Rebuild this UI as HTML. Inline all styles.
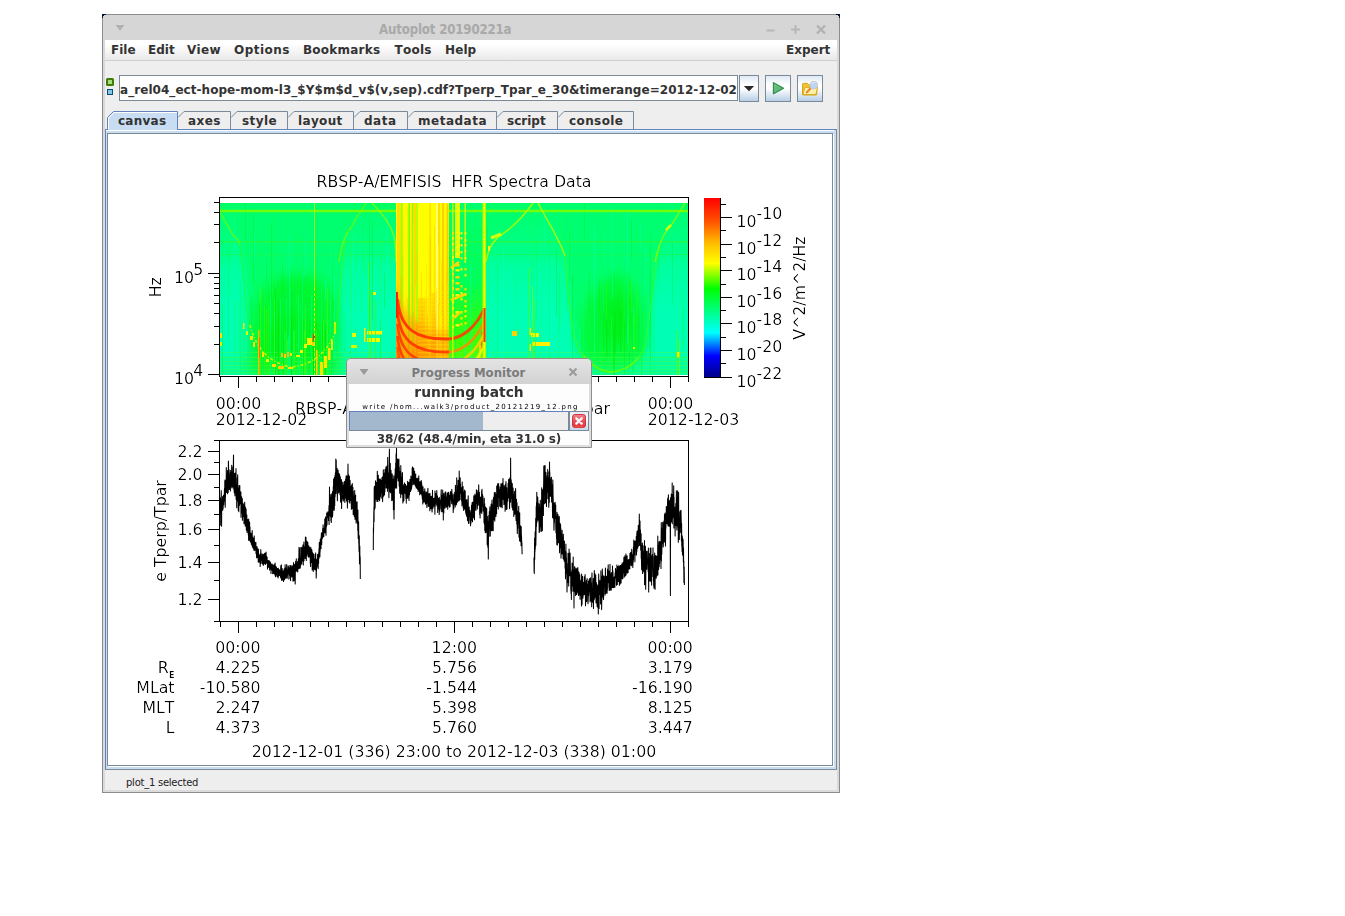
<!DOCTYPE html>
<html><head><meta charset="utf-8"><title>Autoplot 20190221a</title>
<style>
html,body{margin:0;padding:0;background:#fff;}
body{width:1345px;height:916px;position:relative;overflow:hidden;font-family:"DejaVu Sans","Liberation Sans",sans-serif;}
.abs{position:absolute;}
body{font-kerning:none;font-feature-settings:'kern' 0,'liga' 0;}
.ui{font-family:"DejaVu Sans","Liberation Sans",sans-serif;font-weight:bold;font-size:12px;color:#333;white-space:pre;line-height:14px;}
#win{left:102px;top:14px;width:738px;height:779px;background:#eeeeee;}
#titlebar{left:102px;top:14px;width:738px;height:26px;background:#d6d6d6;}
#menubar{left:105px;top:40px;width:732px;height:20px;background:linear-gradient(#ffffff 0%,#ffffff 20%,#e9e9e9 100%);}
.mi{top:43px;}
.tab{top:111px;height:18px;border:1px solid #7a8a99;border-bottom:none;background:#eeeeee;box-sizing:border-box;}
.tabt{top:114px;}
.btn{top:75px;height:27px;box-sizing:border-box;border:1px solid #7a8a99;background:linear-gradient(#dfe9f4 0%,#ffffff 35%,#ffffff 50%,#b8cfe5 100%);}
</style></head><body>
<!-- window frame -->
<div class="abs" id="win"></div>
<div class="abs" id="titlebar"></div>
<div class="abs" style="left:102px;top:14px;width:738px;height:1px;background:#8c8c8c"></div>
<div class="abs" style="left:102px;top:14px;width:1px;height:779px;background:#8c8c8c"></div>
<div class="abs" style="left:839px;top:14px;width:1px;height:779px;background:#8c8c8c"></div>
<div class="abs" style="left:102px;top:792px;width:738px;height:1px;background:#8c8c8c"></div>
<div class="abs" style="left:103px;top:40px;width:2px;height:752px;background:#d9d9d9"></div>
<div class="abs" style="left:837px;top:40px;width:2px;height:752px;background:#d9d9d9"></div>
<div class="abs" style="left:103px;top:790px;width:736px;height:2px;background:#dcdcdc"></div>
<svg class="abs" style="left:102px;top:14px" width="738" height="6" shape-rendering="crispEdges"><path d="M0 0h4v1h-2v1h-1v2h-1z" fill="#04143a"/><path d="M738 0h-4v1h2v1h1v2h1z" fill="#04143a"/></svg>
<div class="abs" style="left:379px;top:21.500px;font-family:'DejaVu Sans Condensed','DejaVu Sans',sans-serif;font-weight:bold;font-size:13.2px;letter-spacing:-0.2px;color:#a9a9a9;white-space:pre;line-height:16px;">Autoplot 20190221a</div>
<svg class="abs" style="left:102px;top:14px" width="738" height="26" viewBox="0 0 738 26">
<path d="M13.500 11h9l-4.500 5.700z" fill="#b0b0b0"/>
<path d="M664.500 16.500h8" stroke="#b7b7b7" stroke-width="2" fill="none"/>
<path d="M689 15.500h9M693.500 11v9" stroke="#b7b7b7" stroke-width="2" fill="none"/>
<path d="M715 11.500l8 8M723 11.500l-8 8" stroke="#b2b2b2" stroke-width="2.400" fill="none"/>
</svg>
<!-- menu bar -->
<div class="abs" id="menubar"></div>
<div class="abs" style="left:105px;top:60px;width:732px;height:1px;background:#cfcfcf"></div>
<div class="abs ui mi" style="left:111px">File</div>
<div class="abs ui mi" style="left:148px">Edit</div>
<div class="abs ui mi" style="left:187px;letter-spacing:0.3px">View</div>
<div class="abs ui mi" style="left:234px;letter-spacing:0.45px">Options</div>
<div class="abs ui mi" style="left:303px;letter-spacing:0.22px">Bookmarks</div>
<div class="abs ui mi" style="left:394.5px;letter-spacing:0.25px">Tools</div>
<div class="abs ui mi" style="left:445px;letter-spacing:0.1px">Help</div>
<div class="abs ui mi" style="left:786px">Expert</div>
<!-- address bar -->
<div class="abs" style="left:106px;top:78px;width:8px;height:8px;box-sizing:border-box;border:2px solid #3d7d05;border-radius:1.500px;background:#a6dc7c"></div>
<div class="abs" style="left:107px;top:89px;width:6px;height:6px;box-sizing:border-box;border:1px solid #064d74;background:#88c4e6"></div>
<div class="abs" style="left:119px;top:75px;width:619px;height:26px;box-sizing:border-box;border:1px solid #7a8a99;background:#fff;overflow:hidden">
<div class="abs ui" style="right:0px;top:6.500px;letter-spacing:0.05px">data_rel04_ect-hope-mom-l3_$Y$m$d_v$(v,sep).cdf?Tperp_Tpar_e_30&amp;timerange=2012-12-02</div></div>
<div class="abs btn" style="left:739px;width:20px"></div>
<svg class="abs" style="left:739px;top:75px" width="20" height="27"><path d="M4.800 11h10.400l-5.200 5.200z" fill="#2b2b2b"/></svg>
<div class="abs btn" style="left:765px;width:26px"></div>
<svg class="abs" style="left:765px;top:75px" width="26" height="27">
<defs><linearGradient id="pg" x1="0" y1="0" x2="1" y2="1"><stop offset="0" stop-color="#8fd3a0"/><stop offset="1" stop-color="#3fa65c"/></linearGradient></defs>
<path d="M8.500 7.700v11l10-5.500z" fill="url(#pg)" stroke="#2c8f4c" stroke-width="1.300" stroke-linejoin="round"/>
<path d="M10 10.300v5.600l5-2.800z" fill="#5cba74" opacity="0.800"/></svg>
<div class="abs btn" style="left:797px;width:26px"></div>
<svg class="abs" style="left:797px;top:75px" width="26" height="27">
<path d="M5.500 9.200q0-.8.800-.8h4.200l1.200 1.600h7.300q.8 0 .8.800v8.400q0 .8-.8.800h-12.700q-.8 0-.8-.8z" fill="#f0c43c" stroke="#d6a416" stroke-width="1"/>
<path d="M5.800 19.500l2.200-7.200h12.600l-1.800 7.200z" fill="#fff2a8" stroke="#d9aa1c" stroke-width="1" stroke-linejoin="round"/>
<path d="M14.200 12.800l-4.400 4.600" stroke="#e8742a" stroke-width="2" stroke-linecap="round"/>
<path d="M13.800 13.300l-3.600 3.800" stroke="#f7c23a" stroke-width="0.700" stroke-dasharray="1 1"/>
<circle cx="16.800" cy="10.200" r="3.700" fill="#b9d6f7" stroke="#cfc6c6" stroke-width="1.100"/>
<path d="M14.600 9.200a2.600 2.600 0 0 1 3.800-1.300" stroke="#e6f1ff" stroke-width="1" fill="none"/>
</svg>
<!-- tabs -->
<svg class="abs" style="left:100px;top:105px" width="560" height="30" viewBox="100 105 560 30" shape-rendering="crispEdges">
<path d="M178.0 117.5L184.0 111.5H230.5V129.5" fill="none" stroke="#7a8a99" stroke-width="1" shape-rendering="auto"/>
<path d="M231.0 117.5L237.0 111.5H287.5V129.5" fill="none" stroke="#7a8a99" stroke-width="1" shape-rendering="auto"/>
<path d="M288.0 117.5L294.0 111.5H353.5V129.5" fill="none" stroke="#7a8a99" stroke-width="1" shape-rendering="auto"/>
<path d="M354.0 117.5L360.0 111.5H407.5V129.5" fill="none" stroke="#7a8a99" stroke-width="1" shape-rendering="auto"/>
<path d="M408.0 117.5L414.0 111.5H496.5V129.5" fill="none" stroke="#7a8a99" stroke-width="1" shape-rendering="auto"/>
<path d="M497.0 117.5L503.0 111.5H557.5V129.5" fill="none" stroke="#7a8a99" stroke-width="1" shape-rendering="auto"/>
<path d="M558.0 117.5L564.0 111.5H633.5V129.5" fill="none" stroke="#7a8a99" stroke-width="1" shape-rendering="auto"/>
</svg>
<div class="abs ui tabt" style="left:188px;letter-spacing:0.4px">axes</div>
<div class="abs ui tabt" style="left:242px;letter-spacing:0.4px">style</div>
<div class="abs ui tabt" style="left:298px;letter-spacing:0.35px">layout</div>
<div class="abs ui tabt" style="left:364px;letter-spacing:0.5px">data</div>
<div class="abs ui tabt" style="left:418px;letter-spacing:0.5px">metadata</div>
<div class="abs ui tabt" style="left:507px">script</div>
<div class="abs ui tabt" style="left:569px;letter-spacing:0.4px">console</div>
<!-- content pane border -->
<div class="abs" style="left:105px;top:129px;width:732px;height:641px;box-sizing:border-box;background:#c8ddf2;border:1px solid #7a8a99;border-left-color:#6382bf;border-top-color:#6382bf"></div>
<div class="abs" style="left:106px;top:130px;width:728px;height:1px;background:#fff"></div>
<div class="abs" style="left:107px;top:133px;width:726px;height:633px;box-sizing:border-box;background:#fff;border:1px solid #7a8a99"></div>
<div class="abs" style="left:833px;top:134px;width:1px;height:633px;background:#fff"></div>
<div class="abs" style="left:108px;top:766px;width:726px;height:1px;background:#fff"></div>
<!-- selected tab -->
<svg class="abs" style="left:100px;top:105px" width="90" height="30" viewBox="100 105 90 30">
<path d="M107.5 133V117.5L113.5 111.5H177.5V129.5H107.5" fill="#c8ddf2" stroke="none"/>
<path d="M108.5 130V118L114 112.5H177" fill="none" stroke="#fff" stroke-width="1"/>
<path d="M107.5 129.5V117.5L113.5 111.5H177.5V129.5" fill="none" stroke="#6382bf" stroke-width="1"/>
<path d="M108 129.500h69" stroke="#c8ddf2" stroke-width="1"/>
</svg>
<div class="abs ui tabt" style="left:118px;letter-spacing:0.25px">canvas</div>
<!-- status bar -->
<div class="abs" style="left:126px;top:777px;font-size:10px;color:#222;white-space:pre;line-height:12px;letter-spacing:-0.25px">plot_1 selected</div>
<svg class="abs" style="left:108px;top:134px" width="724" height="631" viewBox="108 134 724 631" font-family="'DejaVu Sans','Liberation Sans',sans-serif" font-size="15.75px" fill="#000" style="font-kerning:none">
<defs>
<linearGradient id="cb" x1="0" y1="1" x2="0" y2="0">
<stop offset="0" stop-color="rgb(0,0,137)"/><stop offset="0.1176" stop-color="rgb(0,0,255)"/><stop offset="0.2471" stop-color="rgb(0,255,255)"/><stop offset="0.4941" stop-color="rgb(0,255,0)"/><stop offset="0.6353" stop-color="rgb(255,255,0)"/><stop offset="0.7529" stop-color="rgb(255,185,0)"/><stop offset="0.8667" stop-color="rgb(255,84,0)"/><stop offset="1" stop-color="rgb(255,0,0)"/>
</linearGradient>
<linearGradient id="bg" x1="0" y1="0" x2="0" y2="1">
<stop offset="0" stop-color="rgb(0,255,95)"/><stop offset="0.25" stop-color="rgb(0,255,125)"/><stop offset="0.55" stop-color="rgb(0,255,160)"/><stop offset="0.85" stop-color="rgb(0,255,175)"/><stop offset="1" stop-color="rgb(0,255,120)"/>
</linearGradient>
<linearGradient id="yb" x1="0" y1="0" x2="0" y2="1">
<stop offset="0" stop-color="rgb(255,255,0)"/><stop offset="0.45" stop-color="rgb(255,235,0)"/><stop offset="0.75" stop-color="rgb(255,190,0)"/><stop offset="1" stop-color="rgb(255,150,0)"/>
</linearGradient>
<linearGradient id="topg" x1="0" y1="0" x2="0" y2="1">
<stop offset="0" stop-color="rgb(0,255,90)" stop-opacity="1"/><stop offset="0.1" stop-color="rgb(0,255,114)" stop-opacity="1"/><stop offset="0.45" stop-color="rgb(0,255,134)" stop-opacity="0.95"/><stop offset="0.6" stop-color="rgb(0,255,150)" stop-opacity="0.6"/><stop offset="1" stop-color="rgb(0,255,150)" stop-opacity="0"/>
</linearGradient>
<linearGradient id="midg" x1="0" y1="0" x2="0" y2="1">
<stop offset="0" stop-color="rgb(0,255,110)"/><stop offset="0.45" stop-color="rgb(0,255,90)"/><stop offset="0.7" stop-color="rgb(40,255,20)"/><stop offset="1" stop-color="rgb(90,255,0)"/>
</linearGradient>
<filter id="noop" filterUnits="userSpaceOnUse" x="108" y="134" width="724" height="631"><feComponentTransfer><feFuncA type="gamma" exponent="1.7" amplitude="1" offset="0"/></feComponentTransfer></filter>
<filter id="b6" x="-30%" y="-30%" width="160%" height="160%"><feGaussianBlur stdDeviation="6"/></filter>
<filter id="b3" x="-30%" y="-30%" width="160%" height="160%"><feGaussianBlur stdDeviation="3"/></filter>
<filter id="b05" x="-5%" y="-5%" width="110%" height="110%"><feGaussianBlur stdDeviation="0.5"/></filter>
<filter id="b1" x="-30%" y="-30%" width="160%" height="160%"><feGaussianBlur stdDeviation="0.8"/></filter>
<clipPath id="ybc"><rect x="396" y="203" width="53" height="172"/></clipPath>
<clipPath id="sc"><rect x="220" y="203" width="468" height="172"/></clipPath>
</defs>
<g clip-path="url(#sc)">
<rect x="220" y="203" width="468" height="172" fill="rgb(0,255,180)"/>
<rect x="220" y="203" width="468" height="110" fill="url(#topg)"/>
<path d="M222 203 C232 222 240 232 243 250 C246 290 247 320 252 338 C258 356 270 368 290 371 C312 370 330 356 337 332 C340 300 341 268 345 240 C349 222 356 212 364 203Z" fill="rgb(0,255,110)" filter="url(#b3)" opacity="1"/>
<path d="M536 203 C548 222 560 240 565 256 C569 300 571 335 580 352 C590 366 600 372 612 373 C626 371 640 362 646 345 C651 318 653 280 660 246 C666 226 676 212 686 203Z" fill="rgb(0,255,112)" filter="url(#b3)" opacity="1"/>
<path d="M248 375 C246 340 252 300 270 284 C290 270 318 272 330 290 C342 310 342 345 338 375Z" fill="rgb(0,245,25)" filter="url(#b6)" opacity="0.7"/>
<path d="M258 375 C256 345 270 318 294 312 C318 318 332 345 330 375Z" fill="rgb(0,236,0)" filter="url(#b6)" opacity="0.45"/>
<path d="M582 356 C576 318 590 282 616 274 C640 282 650 318 644 356 C628 370 600 370 582 356Z" fill="rgb(0,246,30)" filter="url(#b6)" opacity="0.65"/>
<ellipse cx="617" cy="320" rx="14" ry="24" fill="rgb(0,234,0)" filter="url(#b6)" opacity="0.5"/>
<rect x="449" y="203" width="37" height="172" fill="url(#midg)"/>
<path d="M486 203 H536 C528 212 518 222 508 230 C498 236 490 242 487 262Z" fill="rgb(0,255,110)" opacity="0.75" filter="url(#b1)"/>
<rect x="220" y="356" width="468" height="19" fill="rgb(40,255,70)" opacity="0.22"/>
<rect x="220" y="352" width="468" height="1" fill="rgb(70,255,60)" opacity="0.45"/>
<rect x="220" y="357" width="468" height="1" fill="rgb(70,255,60)" opacity="0.45"/>
<rect x="220" y="361" width="468" height="1" fill="rgb(70,255,60)" opacity="0.45"/>
<rect x="220" y="365" width="468" height="1" fill="rgb(70,255,60)" opacity="0.45"/>
<rect x="220" y="369" width="468" height="1" fill="rgb(70,255,60)" opacity="0.45"/>
<rect x="220" y="372" width="468" height="1" fill="rgb(70,255,60)" opacity="0.45"/>
<rect x="372" y="222.2" width="1" height="98.1" fill="rgb(0,240,30)" opacity="0.45"/>
<rect x="264" y="277.0" width="1" height="129.2" fill="rgb(30,255,60)" opacity="0.21"/>
<rect x="253" y="214.5" width="1" height="70.9" fill="rgb(0,240,30)" opacity="0.48"/>
<rect x="515" y="277.0" width="1" height="27.4" fill="rgb(0,250,100)" opacity="0.21"/>
<rect x="323" y="273.7" width="1" height="36.0" fill="rgb(0,250,100)" opacity="0.24"/>
<rect x="275" y="242.2" width="1" height="117.9" fill="rgb(30,255,60)" opacity="0.23"/>
<rect x="487" y="226.9" width="1" height="31.7" fill="rgb(0,240,30)" opacity="0.37"/>
<rect x="510" y="266.0" width="1" height="83.8" fill="rgb(0,255,205)" opacity="0.34"/>
<rect x="652" y="248.9" width="1" height="49.8" fill="rgb(30,255,60)" opacity="0.41"/>
<rect x="334" y="276.0" width="1" height="83.0" fill="rgb(0,255,205)" opacity="0.42"/>
<rect x="355" y="327.5" width="1" height="34.2" fill="rgb(0,250,100)" opacity="0.25"/>
<rect x="380" y="321.5" width="1" height="70.6" fill="rgb(0,240,30)" opacity="0.43"/>
<rect x="488" y="314.2" width="1" height="57.6" fill="rgb(0,255,205)" opacity="0.38"/>
<rect x="491" y="260.9" width="1" height="120.8" fill="rgb(0,255,205)" opacity="0.34"/>
<rect x="531" y="210.7" width="1" height="104.2" fill="rgb(0,250,100)" opacity="0.29"/>
<rect x="533" y="205.9" width="1" height="75.4" fill="rgb(30,255,60)" opacity="0.38"/>
<rect x="451" y="230.7" width="1" height="54.5" fill="rgb(30,255,60)" opacity="0.32"/>
<rect x="649" y="266.1" width="1" height="40.0" fill="rgb(0,250,100)" opacity="0.36"/>
<rect x="633" y="307.0" width="1" height="123.7" fill="rgb(0,255,205)" opacity="0.41"/>
<rect x="682" y="289.7" width="1" height="65.7" fill="rgb(30,255,60)" opacity="0.25"/>
<rect x="302" y="232.5" width="1" height="48.0" fill="rgb(0,250,100)" opacity="0.45"/>
<rect x="305" y="238.8" width="1" height="37.5" fill="rgb(0,255,205)" opacity="0.38"/>
<rect x="369" y="218.9" width="1" height="123.1" fill="rgb(0,240,30)" opacity="0.34"/>
<rect x="628" y="323.9" width="1" height="101.7" fill="rgb(0,250,100)" opacity="0.32"/>
<rect x="309" y="328.1" width="1" height="72.9" fill="rgb(0,240,30)" opacity="0.30"/>
<rect x="245" y="203.0" width="1" height="38.2" fill="rgb(0,240,30)" opacity="0.48"/>
<rect x="507" y="211.9" width="1" height="45.0" fill="rgb(0,250,100)" opacity="0.24"/>
<rect x="338" y="247.1" width="1" height="63.7" fill="rgb(0,240,30)" opacity="0.23"/>
<rect x="678" y="264.0" width="1" height="57.4" fill="rgb(30,255,60)" opacity="0.23"/>
<rect x="380" y="236.6" width="1" height="119.5" fill="rgb(30,255,60)" opacity="0.35"/>
<rect x="316" y="323.9" width="1" height="63.4" fill="rgb(0,240,30)" opacity="0.43"/>
<rect x="360" y="284.7" width="1" height="30.9" fill="rgb(0,255,205)" opacity="0.36"/>
<rect x="645" y="248.2" width="1" height="46.7" fill="rgb(0,255,205)" opacity="0.39"/>
<rect x="507" y="303.1" width="1" height="111.0" fill="rgb(30,255,60)" opacity="0.44"/>
<rect x="603" y="297.0" width="1" height="47.2" fill="rgb(0,250,100)" opacity="0.31"/>
<rect x="234" y="206.5" width="1" height="53.5" fill="rgb(0,255,205)" opacity="0.26"/>
<rect x="503" y="246.7" width="1" height="117.0" fill="rgb(0,255,205)" opacity="0.49"/>
<rect x="391" y="231.0" width="1" height="47.2" fill="rgb(30,255,60)" opacity="0.30"/>
<rect x="681" y="280.5" width="1" height="20.2" fill="rgb(0,255,205)" opacity="0.44"/>
<rect x="260" y="286.9" width="1" height="129.2" fill="rgb(30,255,60)" opacity="0.34"/>
<rect x="304" y="303.2" width="1" height="59.9" fill="rgb(0,250,100)" opacity="0.34"/>
<rect x="568" y="213.8" width="1" height="39.1" fill="rgb(30,255,60)" opacity="0.21"/>
<rect x="497" y="262.1" width="1" height="98.7" fill="rgb(0,250,100)" opacity="0.40"/>
<rect x="384" y="272.7" width="1" height="35.7" fill="rgb(0,240,30)" opacity="0.44"/>
<rect x="560" y="216.1" width="1" height="109.9" fill="rgb(30,255,60)" opacity="0.33"/>
<rect x="628" y="307.9" width="1" height="45.3" fill="rgb(0,255,205)" opacity="0.26"/>
<rect x="455" y="300.0" width="1" height="59.1" fill="rgb(0,250,100)" opacity="0.45"/>
<rect x="249" y="297.0" width="1" height="127.7" fill="rgb(0,250,100)" opacity="0.45"/>
<rect x="631" y="219.6" width="1" height="38.2" fill="rgb(0,240,30)" opacity="0.46"/>
<rect x="583" y="280.3" width="1" height="113.1" fill="rgb(30,255,60)" opacity="0.25"/>
<rect x="559" y="273.7" width="1" height="59.1" fill="rgb(0,250,100)" opacity="0.44"/>
<rect x="270" y="274.2" width="1" height="49.8" fill="rgb(0,255,205)" opacity="0.21"/>
<rect x="266" y="260.4" width="1" height="23.3" fill="rgb(0,240,30)" opacity="0.33"/>
<rect x="507" y="267.2" width="1" height="81.5" fill="rgb(0,255,205)" opacity="0.34"/>
<rect x="470" y="263.7" width="1" height="133.0" fill="rgb(0,255,205)" opacity="0.48"/>
<rect x="638" y="228.7" width="1" height="73.7" fill="rgb(0,250,100)" opacity="0.24"/>
<rect x="254" y="233.6" width="1" height="28.8" fill="rgb(0,255,205)" opacity="0.44"/>
<rect x="640" y="222.6" width="1" height="105.9" fill="rgb(0,255,205)" opacity="0.24"/>
<rect x="633" y="325.9" width="1" height="46.4" fill="rgb(0,240,30)" opacity="0.32"/>
<rect x="683" y="308.7" width="1" height="39.4" fill="rgb(0,250,100)" opacity="0.50"/>
<rect x="387" y="214.7" width="1" height="63.9" fill="rgb(0,255,205)" opacity="0.37"/>
<rect x="228" y="245.1" width="1" height="94.9" fill="rgb(0,240,30)" opacity="0.23"/>
<rect x="650" y="232.0" width="1" height="125.2" fill="rgb(0,240,30)" opacity="0.28"/>
<rect x="239" y="301.9" width="1" height="52.5" fill="rgb(30,255,60)" opacity="0.45"/>
<rect x="618" y="288.8" width="1" height="133.5" fill="rgb(0,250,100)" opacity="0.24"/>
<rect x="650" y="275.5" width="1" height="104.1" fill="rgb(0,240,30)" opacity="0.28"/>
<rect x="594" y="226.3" width="1" height="127.4" fill="rgb(0,255,205)" opacity="0.48"/>
<rect x="517" y="304.8" width="1" height="30.0" fill="rgb(30,255,60)" opacity="0.22"/>
<rect x="624" y="260.6" width="1" height="60.7" fill="rgb(0,250,100)" opacity="0.48"/>
<rect x="345" y="219.4" width="1" height="83.2" fill="rgb(30,255,60)" opacity="0.48"/>
<rect x="674" y="236.3" width="1" height="41.7" fill="rgb(0,255,205)" opacity="0.39"/>
<rect x="469" y="229.1" width="1" height="73.5" fill="rgb(30,255,60)" opacity="0.28"/>
<rect x="596" y="329.3" width="1" height="24.4" fill="rgb(0,240,30)" opacity="0.42"/>
<rect x="478" y="227.1" width="1" height="77.0" fill="rgb(0,250,100)" opacity="0.23"/>
<rect x="603" y="257.9" width="1" height="79.4" fill="rgb(0,250,100)" opacity="0.49"/>
<rect x="364" y="230.3" width="1" height="47.5" fill="rgb(30,255,60)" opacity="0.45"/>
<rect x="551" y="283.8" width="1" height="68.6" fill="rgb(0,255,205)" opacity="0.49"/>
<rect x="612" y="204.8" width="1" height="95.1" fill="rgb(0,255,205)" opacity="0.33"/>
<rect x="246" y="287.5" width="1" height="65.7" fill="rgb(0,255,205)" opacity="0.38"/>
<rect x="544" y="208.7" width="1" height="42.2" fill="rgb(0,255,205)" opacity="0.33"/>
<rect x="343" y="325.1" width="1" height="136.7" fill="rgb(0,255,205)" opacity="0.27"/>
<rect x="672" y="242.3" width="1" height="62.8" fill="rgb(0,240,30)" opacity="0.30"/>
<rect x="259" y="238.4" width="1" height="98.7" fill="rgb(30,255,60)" opacity="0.35"/>
<rect x="222" y="236.5" width="1" height="30.8" fill="rgb(0,250,100)" opacity="0.38"/>
<rect x="360" y="283.0" width="1" height="30.1" fill="rgb(30,255,60)" opacity="0.40"/>
<rect x="555" y="314.6" width="1" height="66.7" fill="rgb(0,255,205)" opacity="0.42"/>
<rect x="451" y="239.1" width="1" height="94.2" fill="rgb(30,255,60)" opacity="0.21"/>
<rect x="611" y="316.3" width="1" height="95.3" fill="rgb(30,255,60)" opacity="0.47"/>
<rect x="572" y="275.2" width="1" height="117.5" fill="rgb(0,240,30)" opacity="0.45"/>
<rect x="493" y="316.4" width="1" height="101.9" fill="rgb(30,255,60)" opacity="0.23"/>
<rect x="240" y="283.9" width="1" height="135.1" fill="rgb(0,250,100)" opacity="0.45"/>
<rect x="481" y="282.7" width="1" height="95.1" fill="rgb(30,255,60)" opacity="0.35"/>
<rect x="222" y="304.3" width="1" height="109.8" fill="rgb(0,240,30)" opacity="0.40"/>
<rect x="251" y="296.6" width="1" height="50.3" fill="rgb(0,240,30)" opacity="0.45"/>
<rect x="330" y="299.1" width="1" height="47.7" fill="rgb(0,250,100)" opacity="0.35"/>
<rect x="540" y="300.4" width="1" height="94.0" fill="rgb(30,255,60)" opacity="0.22"/>
<rect x="289" y="235.3" width="1" height="109.2" fill="rgb(0,255,205)" opacity="0.39"/>
<rect x="282" y="264.3" width="1" height="78.3" fill="rgb(0,240,30)" opacity="0.41"/>
<rect x="536" y="239.9" width="1" height="82.0" fill="rgb(0,250,100)" opacity="0.34"/>
<rect x="579" y="329.1" width="1" height="85.9" fill="rgb(0,255,205)" opacity="0.49"/>
<rect x="658" y="205.2" width="1" height="75.1" fill="rgb(0,250,100)" opacity="0.50"/>
<rect x="649" y="321.2" width="1" height="29.0" fill="rgb(0,240,30)" opacity="0.24"/>
<rect x="465" y="324.0" width="1" height="35.9" fill="rgb(0,255,205)" opacity="0.47"/>
<rect x="549" y="232.4" width="1" height="127.7" fill="rgb(0,250,100)" opacity="0.32"/>
<rect x="294" y="323.6" width="1" height="101.8" fill="rgb(0,250,100)" opacity="0.29"/>
<rect x="286" y="246.7" width="1" height="57.9" fill="rgb(0,255,205)" opacity="0.20"/>
<rect x="571" y="309.6" width="1" height="34.4" fill="rgb(30,255,60)" opacity="0.41"/>
<rect x="642" y="239.8" width="1" height="64.7" fill="rgb(0,250,100)" opacity="0.32"/>
<rect x="627" y="212.7" width="1" height="131.0" fill="rgb(0,255,205)" opacity="0.46"/>
<rect x="351" y="209.6" width="1" height="99.4" fill="rgb(30,255,60)" opacity="0.27"/>
<rect x="344" y="267.9" width="1" height="42.8" fill="rgb(0,255,205)" opacity="0.44"/>
<rect x="234" y="299.7" width="1" height="68.0" fill="rgb(30,255,60)" opacity="0.42"/>
<rect x="243" y="296.0" width="1" height="74.1" fill="rgb(30,255,60)" opacity="0.39"/>
<rect x="354" y="209.2" width="1" height="131.2" fill="rgb(30,255,60)" opacity="0.25"/>
<rect x="352" y="235.5" width="1" height="108.6" fill="rgb(0,255,205)" opacity="0.32"/>
<rect x="332" y="264.4" width="1" height="100.3" fill="rgb(0,240,30)" opacity="0.25"/>
<rect x="296" y="229.4" width="1" height="128.7" fill="rgb(0,250,100)" opacity="0.37"/>
<rect x="376" y="299.4" width="1" height="71.3" fill="rgb(30,255,60)" opacity="0.27"/>
<rect x="302" y="273.6" width="1" height="58.3" fill="rgb(0,255,205)" opacity="0.28"/>
<rect x="487" y="315.7" width="1" height="110.0" fill="rgb(0,250,100)" opacity="0.31"/>
<rect x="569" y="229.7" width="1" height="52.4" fill="rgb(0,240,30)" opacity="0.35"/>
<rect x="489" y="248.7" width="1" height="102.4" fill="rgb(30,255,60)" opacity="0.23"/>
<rect x="640" y="251.8" width="1" height="97.5" fill="rgb(0,250,100)" opacity="0.49"/>
<rect x="617" y="313.9" width="1" height="22.6" fill="rgb(0,240,30)" opacity="0.33"/>
<rect x="577" y="305.1" width="1" height="136.2" fill="rgb(0,250,100)" opacity="0.20"/>
<rect x="654" y="307.8" width="1" height="122.7" fill="rgb(0,250,100)" opacity="0.27"/>
<rect x="271" y="222.6" width="1" height="82.7" fill="rgb(0,240,30)" opacity="0.48"/>
<rect x="558" y="285.2" width="1" height="111.8" fill="rgb(0,250,100)" opacity="0.23"/>
<rect x="584" y="203.2" width="1" height="35.1" fill="rgb(0,240,30)" opacity="0.39"/>
<rect x="362" y="219.3" width="1" height="50.2" fill="rgb(0,250,100)" opacity="0.41"/>
<rect x="272" y="211.9" width="1" height="82.9" fill="rgb(30,255,60)" opacity="0.32"/>
<rect x="325" y="279.3" width="1" height="21.3" fill="rgb(0,255,205)" opacity="0.50"/>
<rect x="350" y="243.2" width="1" height="120.7" fill="rgb(30,255,60)" opacity="0.34"/>
<rect x="330" y="234.4" width="1" height="135.3" fill="rgb(0,255,205)" opacity="0.22"/>
<rect x="311" y="315.4" width="1" height="97.7" fill="rgb(0,240,30)" opacity="0.28"/>
<rect x="532" y="320.5" width="1" height="47.2" fill="rgb(0,240,30)" opacity="0.41"/>
<rect x="556" y="249.0" width="1" height="67.6" fill="rgb(0,240,30)" opacity="0.44"/>
<rect x="566" y="267.1" width="1" height="44.6" fill="rgb(30,255,60)" opacity="0.29"/>
<rect x="604" y="232.3" width="1" height="46.6" fill="rgb(0,255,205)" opacity="0.23"/>
<rect x="305" y="318.6" width="1" height="56.4" fill="rgb(70,255,0)" opacity="0.47"/>
<rect x="327" y="288.1" width="1" height="86.9" fill="rgb(70,255,0)" opacity="0.62"/>
<rect x="260" y="286.3" width="1" height="88.7" fill="rgb(70,255,0)" opacity="0.45"/>
<rect x="311" y="295.1" width="1" height="79.9" fill="rgb(0,255,130)" opacity="0.61"/>
<rect x="325" y="325.3" width="1" height="49.7" fill="rgb(0,222,0)" opacity="0.63"/>
<rect x="282" y="295.2" width="1" height="79.8" fill="rgb(0,255,130)" opacity="0.31"/>
<rect x="308" y="305.8" width="1" height="69.2" fill="rgb(0,245,40)" opacity="0.64"/>
<rect x="291" y="291.0" width="1" height="84.0" fill="rgb(0,222,0)" opacity="0.40"/>
<rect x="283" y="337.6" width="1" height="37.4" fill="rgb(0,222,0)" opacity="0.50"/>
<rect x="315" y="305.9" width="1" height="69.1" fill="rgb(0,245,40)" opacity="0.59"/>
<rect x="290" y="287.7" width="1" height="87.3" fill="rgb(0,255,130)" opacity="0.37"/>
<rect x="298" y="309.5" width="1" height="65.5" fill="rgb(0,245,40)" opacity="0.43"/>
<rect x="326" y="286.7" width="1" height="88.3" fill="rgb(0,255,130)" opacity="0.39"/>
<rect x="305" y="307.3" width="1" height="67.7" fill="rgb(0,255,130)" opacity="0.31"/>
<rect x="261" y="335.6" width="1" height="39.4" fill="rgb(0,245,40)" opacity="0.37"/>
<rect x="261" y="318.3" width="1" height="56.7" fill="rgb(0,245,40)" opacity="0.40"/>
<rect x="331" y="318.9" width="1" height="56.1" fill="rgb(0,245,40)" opacity="0.56"/>
<rect x="310" y="335.8" width="1" height="39.2" fill="rgb(0,245,40)" opacity="0.30"/>
<rect x="315" y="335.4" width="1" height="39.6" fill="rgb(0,222,0)" opacity="0.31"/>
<rect x="274" y="311.1" width="1" height="63.9" fill="rgb(0,255,130)" opacity="0.63"/>
<rect x="286" y="298.8" width="1" height="76.2" fill="rgb(0,255,130)" opacity="0.59"/>
<rect x="266" y="312.3" width="1" height="62.7" fill="rgb(0,222,0)" opacity="0.58"/>
<rect x="314" y="330.3" width="1" height="44.7" fill="rgb(70,255,0)" opacity="0.51"/>
<rect x="282" y="302.6" width="1" height="72.4" fill="rgb(0,245,40)" opacity="0.57"/>
<rect x="302" y="313.2" width="1" height="61.8" fill="rgb(0,255,130)" opacity="0.56"/>
<rect x="275" y="288.6" width="1" height="86.4" fill="rgb(0,222,0)" opacity="0.47"/>
<rect x="298" y="293.8" width="1" height="81.2" fill="rgb(0,255,130)" opacity="0.61"/>
<rect x="333" y="299.6" width="1" height="75.4" fill="rgb(0,222,0)" opacity="0.37"/>
<rect x="289" y="339.4" width="1" height="35.6" fill="rgb(0,255,130)" opacity="0.36"/>
<rect x="266" y="310.4" width="1" height="64.6" fill="rgb(70,255,0)" opacity="0.56"/>
<rect x="322" y="321.5" width="1" height="53.5" fill="rgb(0,222,0)" opacity="0.57"/>
<rect x="279" y="300.4" width="1" height="74.6" fill="rgb(0,245,40)" opacity="0.43"/>
<rect x="314" y="296.0" width="1" height="79.0" fill="rgb(70,255,0)" opacity="0.37"/>
<rect x="274" y="300.5" width="1" height="74.5" fill="rgb(70,255,0)" opacity="0.41"/>
<rect x="287" y="339.6" width="1" height="35.4" fill="rgb(70,255,0)" opacity="0.53"/>
<rect x="264" y="310.5" width="1" height="64.5" fill="rgb(0,222,0)" opacity="0.34"/>
<rect x="293" y="330.1" width="1" height="44.9" fill="rgb(0,255,130)" opacity="0.62"/>
<rect x="259" y="301.2" width="1" height="73.8" fill="rgb(0,222,0)" opacity="0.32"/>
<rect x="303" y="330.5" width="1" height="44.5" fill="rgb(70,255,0)" opacity="0.63"/>
<rect x="285" y="332.6" width="1" height="42.4" fill="rgb(0,255,130)" opacity="0.51"/>
<rect x="316" y="321.6" width="1" height="53.4" fill="rgb(0,222,0)" opacity="0.34"/>
<rect x="302" y="319.1" width="1" height="55.9" fill="rgb(70,255,0)" opacity="0.31"/>
<rect x="283" y="287.4" width="1" height="87.6" fill="rgb(0,245,40)" opacity="0.31"/>
<rect x="313" y="335.3" width="1" height="39.7" fill="rgb(0,222,0)" opacity="0.59"/>
<rect x="288" y="305.4" width="1" height="69.6" fill="rgb(0,245,40)" opacity="0.33"/>
<rect x="258" y="312.3" width="1" height="62.7" fill="rgb(0,255,130)" opacity="0.32"/>
<rect x="264" y="306.7" width="1" height="68.3" fill="rgb(70,255,0)" opacity="0.52"/>
<rect x="263" y="294.0" width="1" height="81.0" fill="rgb(0,245,40)" opacity="0.44"/>
<rect x="278" y="301.9" width="1" height="73.1" fill="rgb(0,222,0)" opacity="0.41"/>
<rect x="300" y="304.6" width="1" height="70.4" fill="rgb(0,255,130)" opacity="0.31"/>
<rect x="316" y="329.1" width="1" height="45.9" fill="rgb(70,255,0)" opacity="0.44"/>
<rect x="288" y="336.8" width="1" height="38.2" fill="rgb(0,255,130)" opacity="0.62"/>
<rect x="289" y="330.1" width="1" height="44.9" fill="rgb(0,255,130)" opacity="0.50"/>
<rect x="284" y="327.5" width="1" height="47.5" fill="rgb(70,255,0)" opacity="0.31"/>
<rect x="299" y="320.2" width="1" height="54.8" fill="rgb(0,255,130)" opacity="0.33"/>
<rect x="305" y="305.4" width="1" height="69.6" fill="rgb(70,255,0)" opacity="0.35"/>
<rect x="278" y="313.7" width="1" height="61.3" fill="rgb(0,222,0)" opacity="0.34"/>
<rect x="294" y="329.3" width="1" height="45.7" fill="rgb(70,255,0)" opacity="0.41"/>
<rect x="321" y="287.4" width="1" height="87.6" fill="rgb(0,255,130)" opacity="0.41"/>
<rect x="303" y="320.0" width="1" height="55.0" fill="rgb(0,222,0)" opacity="0.62"/>
<rect x="304" y="330.4" width="1" height="44.6" fill="rgb(70,255,0)" opacity="0.52"/>
<rect x="323" y="319.2" width="1" height="55.8" fill="rgb(70,255,0)" opacity="0.59"/>
<rect x="270" y="297.0" width="1" height="78.0" fill="rgb(0,255,130)" opacity="0.63"/>
<rect x="268" y="304.8" width="1" height="70.2" fill="rgb(70,255,0)" opacity="0.39"/>
<rect x="313" y="334.4" width="1" height="40.6" fill="rgb(0,222,0)" opacity="0.61"/>
<rect x="322" y="322.0" width="1" height="53.0" fill="rgb(0,245,40)" opacity="0.34"/>
<rect x="303" y="315.3" width="1" height="59.7" fill="rgb(0,245,40)" opacity="0.53"/>
<rect x="280" y="298.7" width="1" height="76.3" fill="rgb(0,255,130)" opacity="0.53"/>
<rect x="291" y="309.1" width="1" height="65.9" fill="rgb(0,222,0)" opacity="0.30"/>
<rect x="333" y="310.6" width="1" height="64.4" fill="rgb(0,255,130)" opacity="0.57"/>
<rect x="629" y="297.5" width="1" height="70.5" fill="rgb(0,222,0)" opacity="0.30"/>
<rect x="589" y="291.5" width="1" height="34.6" fill="rgb(40,255,20)" opacity="0.31"/>
<rect x="614" y="272.4" width="1" height="36.5" fill="rgb(0,245,40)" opacity="0.43"/>
<rect x="603" y="313.2" width="1" height="32.7" fill="rgb(0,222,0)" opacity="0.33"/>
<rect x="607" y="327.1" width="1" height="31.3" fill="rgb(0,222,0)" opacity="0.22"/>
<rect x="620" y="311.6" width="1" height="39.7" fill="rgb(0,222,0)" opacity="0.45"/>
<rect x="613" y="327.4" width="1" height="64.3" fill="rgb(0,222,0)" opacity="0.38"/>
<rect x="598" y="320.0" width="1" height="67.8" fill="rgb(0,245,40)" opacity="0.24"/>
<rect x="636" y="286.5" width="1" height="37.2" fill="rgb(40,255,20)" opacity="0.33"/>
<rect x="637" y="282.5" width="1" height="60.8" fill="rgb(40,255,20)" opacity="0.26"/>
<rect x="606" y="281.9" width="1" height="38.1" fill="rgb(40,255,20)" opacity="0.43"/>
<rect x="624" y="323.7" width="1" height="69.6" fill="rgb(0,222,0)" opacity="0.27"/>
<rect x="629" y="272.9" width="1" height="78.3" fill="rgb(40,255,20)" opacity="0.31"/>
<rect x="615" y="311.3" width="1" height="42.6" fill="rgb(0,222,0)" opacity="0.33"/>
<rect x="634" y="314.3" width="1" height="43.2" fill="rgb(40,255,20)" opacity="0.45"/>
<rect x="618" y="291.6" width="1" height="52.1" fill="rgb(0,222,0)" opacity="0.24"/>
<rect x="627" y="272.9" width="1" height="42.7" fill="rgb(0,245,40)" opacity="0.36"/>
<rect x="641" y="305.2" width="1" height="74.8" fill="rgb(0,245,40)" opacity="0.38"/>
<rect x="628" y="283.3" width="1" height="60.8" fill="rgb(40,255,20)" opacity="0.31"/>
<rect x="614" y="323.7" width="1" height="54.4" fill="rgb(0,222,0)" opacity="0.35"/>
<rect x="588" y="273.3" width="1" height="47.7" fill="rgb(0,245,40)" opacity="0.23"/>
<rect x="605" y="283.5" width="1" height="45.1" fill="rgb(0,245,40)" opacity="0.23"/>
<rect x="606" y="319.7" width="1" height="36.7" fill="rgb(0,222,0)" opacity="0.43"/>
<rect x="599" y="279.0" width="1" height="33.2" fill="rgb(0,222,0)" opacity="0.24"/>
<rect x="623" y="286.2" width="1" height="78.4" fill="rgb(40,255,20)" opacity="0.21"/>
<rect x="632" y="323.6" width="1" height="62.3" fill="rgb(0,245,40)" opacity="0.31"/>
<rect x="638" y="314.0" width="1" height="38.3" fill="rgb(0,222,0)" opacity="0.20"/>
<rect x="589" y="271.5" width="1" height="41.9" fill="rgb(0,222,0)" opacity="0.21"/>
<rect x="629" y="270.7" width="1" height="62.8" fill="rgb(0,245,40)" opacity="0.25"/>
<rect x="609" y="301.1" width="1" height="55.3" fill="rgb(0,245,40)" opacity="0.36"/>
<rect x="631" y="280.5" width="1" height="33.2" fill="rgb(40,255,20)" opacity="0.36"/>
<rect x="642" y="313.5" width="1" height="65.8" fill="rgb(40,255,20)" opacity="0.20"/>
<rect x="633" y="314.7" width="1" height="34.0" fill="rgb(40,255,20)" opacity="0.36"/>
<rect x="595" y="329.8" width="1" height="41.6" fill="rgb(40,255,20)" opacity="0.21"/>
<rect x="604" y="315.0" width="1" height="77.1" fill="rgb(0,245,40)" opacity="0.27"/>
<rect x="220" y="210" width="468" height="2" fill="rgb(140,255,0)"/>
<rect x="220" y="209.500" width="468" height="3" fill="rgb(90,255,20)" opacity="0.5"/>
<rect x="220" y="241" width="468" height="1.500" fill="rgb(40,250,50)" opacity="0.75"/>
<rect x="220" y="254" width="468" height="1" fill="rgb(40,250,60)" opacity="0.5"/>
<path d="M221 213 C226 226 229 226 231 232 C234 240 236 232 240 245" fill="none" stroke="rgb(110,255,0)" stroke-width="1.6" opacity="0.70"/>
<path d="M240 245 C245 280 246 315 250 333" fill="none" stroke="rgb(40,245,40)" stroke-width="1.2" opacity="0.60"/>
<path d="M250 325 C256 348 268 362 290 367 C312 366 328 352 336 330" fill="none" stroke="rgb(215,255,0)" stroke-width="1.6" opacity="0.85" stroke-dasharray="3 2 1 2"/>
<path d="M336 330 C340 300 341 270 345 240" fill="none" stroke="rgb(60,250,20)" stroke-width="1.2" opacity="0.60"/>
<path d="M339 262 C341 244 347 232 352 226 C357 216 362 210 366 203" fill="none" stroke="rgb(120,255,0)" stroke-width="1.5" opacity="0.70"/>
<path d="M372 203 C380 212 390 222 394 236 C396 246 396 252 396 262" fill="none" stroke="rgb(150,255,0)" stroke-width="1.5" opacity="0.75"/>
<path d="M486 262 C489 242 498 237 508 230 C518 222 528 210 533 203" fill="none" stroke="rgb(170,255,0)" stroke-width="1.6" opacity="0.90"/>
<path d="M491 238 l10 -4" fill="none" stroke="rgb(235,255,0)" stroke-width="3.0" opacity="0.90"/>
<path d="M538 203 C548 222 560 240 565 256" fill="none" stroke="rgb(190,255,0)" stroke-width="1.5" opacity="0.85"/>
<path d="M565 256 C569 300 571 335 580 352 C590 366 600 371 612 372 C626 370 640 361 645 345 C650 320 652 280 660 245" fill="none" stroke="rgb(70,250,20)" stroke-width="1.3" opacity="0.60"/>
<path d="M584 356 C594 368 604 372 612 372 C622 371 632 366 638 358" fill="none" stroke="rgb(120,255,0)" stroke-width="1.5" opacity="0.70"/>
<path d="M655 262 C658 246 664 232 672 224 C677 216 682 208 685 203" fill="none" stroke="rgb(140,255,0)" stroke-width="1.5" opacity="0.80"/>
<path d="M666 230 l5 -5" fill="none" stroke="rgb(230,255,0)" stroke-width="2.5" opacity="0.90"/>
<g filter="url(#b05)">
<rect x="243.0" y="323.0" width="1.5" height="6.0" fill="#ffe000" opacity="1.00"/>
<rect x="246.0" y="331.0" width="2.0" height="4.0" fill="#e8ff00" opacity="1.00"/>
<rect x="250.0" y="336.0" width="3.0" height="4.0" fill="#ffe000" opacity="1.00"/>
<rect x="253.0" y="342.0" width="2.0" height="5.0" fill="#ffe000" opacity="1.00"/>
<rect x="258.0" y="330.0" width="1.5" height="45.0" fill="#ffb800" opacity="1.00"/>
<rect x="259.0" y="338.0" width="1.0" height="20.0" fill="#ff7000" opacity="1.00"/>
<rect x="262.0" y="352.0" width="2.0" height="5.0" fill="#ffe000" opacity="1.00"/>
<rect x="266.0" y="359.0" width="3.0" height="3.0" fill="#e8ff00" opacity="1.00"/>
<rect x="272.0" y="364.0" width="4.0" height="3.0" fill="#ffe000" opacity="1.00"/>
<rect x="278.0" y="366.0" width="6.0" height="3.0" fill="#ffd000" opacity="1.00"/>
<rect x="288.0" y="367.0" width="5.0" height="2.0" fill="#ffe800" opacity="1.00"/>
<rect x="281.0" y="353.0" width="2.0" height="4.0" fill="#ffc000" opacity="1.00"/>
<rect x="284.0" y="354.0" width="2.0" height="4.0" fill="#ffd000" opacity="1.00"/>
<rect x="287.0" y="352.0" width="2.0" height="5.0" fill="#ffc000" opacity="1.00"/>
<rect x="290.0" y="353.0" width="2.0" height="3.0" fill="#ffe000" opacity="1.00"/>
<rect x="296.0" y="355.0" width="4.0" height="2.0" fill="#e8ff00" opacity="1.00"/>
<rect x="300.0" y="350.0" width="3.0" height="3.0" fill="#fff000" opacity="1.00"/>
<rect x="304.0" y="344.0" width="3.0" height="4.0" fill="#e8ff00" opacity="1.00"/>
<rect x="307.0" y="338.0" width="5.0" height="7.0" fill="#fff000" opacity="1.00"/>
<rect x="313.0" y="334.0" width="2.0" height="7.0" fill="#ff3000" opacity="1.00"/>
<rect x="312.0" y="342.0" width="3.0" height="4.0" fill="#ffd000" opacity="1.00"/>
<rect x="316.0" y="350.0" width="1.5" height="25.0" fill="#ffd000" opacity="1.00"/>
<rect x="320.0" y="362.0" width="3.0" height="13.0" fill="#ffe000" opacity="1.00"/>
<rect x="324.0" y="356.0" width="3.0" height="12.0" fill="#ffe800" opacity="1.00"/>
<rect x="328.0" y="348.0" width="2.5" height="12.0" fill="#ffe000" opacity="1.00"/>
<rect x="331.0" y="340.0" width="2.0" height="10.0" fill="#e0ff00" opacity="1.00"/>
<rect x="334.0" y="322.0" width="2.0" height="12.0" fill="#c0ff00" opacity="1.00"/>
<rect x="352.0" y="333.0" width="4.0" height="4.0" fill="#e8ff00" opacity="1.00"/>
<rect x="351.0" y="345.0" width="6.0" height="3.0" fill="#d0ff00" opacity="1.00"/>
<rect x="364.0" y="328.0" width="1.5" height="14.0" fill="#ffe800" opacity="1.00"/>
<rect x="367.0" y="331.0" width="15.0" height="3.5" fill="#fff000" opacity="1.00"/>
<rect x="367.0" y="338.0" width="13.0" height="4.0" fill="#f0ff00" opacity="1.00"/>
<rect x="373.0" y="292.0" width="3.0" height="3.0" fill="#f0ff00" opacity="1.00"/>
<rect x="220.0" y="333.0" width="2.0" height="5.0" fill="#ffe000" opacity="1.00"/>
<rect x="220.0" y="342.0" width="2.0" height="4.0" fill="#d0ff00" opacity="1.00"/>
<rect x="512.0" y="331.0" width="5.0" height="5.0" fill="#ffd000" opacity="1.00"/>
<rect x="529.0" y="328.0" width="2.0" height="7.0" fill="#ffe000" opacity="1.00"/>
<rect x="531.0" y="333.0" width="8.0" height="4.0" fill="#f0ff00" opacity="1.00"/>
<rect x="532.0" y="342.0" width="18.0" height="4.0" fill="#fff000" opacity="1.00"/>
<rect x="529.0" y="344.0" width="2.0" height="7.0" fill="#ffe000" opacity="1.00"/>
<rect x="677.0" y="352.0" width="3.0" height="5.0" fill="#ffe800" opacity="1.00"/>
<rect x="488.0" y="246.0" width="2.0" height="5.0" fill="#fff000" opacity="1.00"/>
<rect x="633.0" y="347.0" width="2.0" height="2.0" fill="#e8ff00" opacity="1.00"/>
<rect x="483.0" y="312.0" width="2.5" height="28.0" fill="#ff3000" opacity="1.00"/>
<rect x="481.0" y="332.0" width="2.0" height="18.0" fill="#ff7000" opacity="1.00"/>
<rect x="479.0" y="345.0" width="2.0" height="14.0" fill="#ffd000" opacity="1.00"/>
</g>
<rect x="368" y="262" width="1" height="113" fill="rgb(90,255,0)" opacity="0.7"/>
<rect x="371" y="290" width="1" height="85" fill="rgb(70,250,20)" opacity="0.7"/>
<rect x="375" y="300" width="1" height="75" fill="rgb(60,250,30)" opacity="0.7"/>
<rect x="529" y="268" width="1" height="107" fill="rgb(90,255,0)" opacity="0.7"/>
<rect x="532" y="286" width="1" height="89" fill="rgb(120,255,0)" opacity="0.7"/>
<rect x="535" y="300" width="1" height="75" fill="rgb(70,250,20)" opacity="0.7"/>
<rect x="676" y="330" width="1" height="45" fill="rgb(90,255,0)" opacity="0.7"/>
<rect x="679" y="340" width="1" height="35" fill="rgb(120,255,0)" opacity="0.7"/>
<rect x="314" y="203" width="1" height="85" fill="rgb(190,255,0)" opacity="0.85"/>
<rect x="314" y="288" width="1" height="3" fill="rgb(235,255,0)" opacity="0.9"/>
<rect x="314" y="293" width="1" height="3" fill="rgb(235,255,0)" opacity="0.9"/>
<rect x="314" y="298" width="1" height="3" fill="rgb(235,255,0)" opacity="0.9"/>
<rect x="314" y="303" width="1" height="3" fill="rgb(235,255,0)" opacity="0.9"/>
<rect x="314" y="308" width="1" height="3" fill="rgb(235,255,0)" opacity="0.9"/>
<rect x="314" y="313" width="1" height="3" fill="rgb(235,255,0)" opacity="0.9"/>
<rect x="314" y="318" width="1" height="3" fill="rgb(235,255,0)" opacity="0.9"/>
<rect x="314" y="323" width="1" height="3" fill="rgb(235,255,0)" opacity="0.9"/>
<rect x="314" y="328" width="1" height="3" fill="rgb(235,255,0)" opacity="0.9"/>
<rect x="314" y="333" width="1" height="3" fill="rgb(235,255,0)" opacity="0.9"/>
<rect x="314" y="338" width="1" height="3" fill="rgb(235,255,0)" opacity="0.9"/>
<rect x="314" y="343" width="1" height="3" fill="rgb(235,255,0)" opacity="0.9"/>
<rect x="314" y="348" width="1" height="3" fill="rgb(235,255,0)" opacity="0.9"/>
<rect x="314" y="353" width="1" height="3" fill="rgb(235,255,0)" opacity="0.9"/>
<rect x="314" y="358" width="1" height="3" fill="rgb(235,255,0)" opacity="0.9"/>
<rect x="314" y="363" width="1" height="3" fill="rgb(235,255,0)" opacity="0.9"/>
<rect x="314" y="368" width="1" height="3" fill="rgb(235,255,0)" opacity="0.9"/>
<rect x="314" y="373" width="1" height="3" fill="rgb(235,255,0)" opacity="0.9"/>
<rect x="396" y="203" width="53" height="172" fill="url(#yb)"/>
<rect x="397.0" y="203" width="3.5" height="172" fill="rgb(255,215,0)" opacity="0.80"/>
<rect x="400.5" y="203" width="2.5" height="150" fill="rgb(150,255,0)" opacity="0.90"/>
<rect x="403.0" y="203" width="5.0" height="172" fill="rgb(255,250,0)" opacity="0.90"/>
<rect x="408.3" y="203" width="1.7" height="172" fill="rgb(110,255,0)" opacity="0.90"/>
<rect x="410.0" y="203" width="1.8" height="172" fill="rgb(255,240,0)" opacity="0.90"/>
<rect x="411.8" y="203" width="1.7" height="140" fill="rgb(120,255,0)" opacity="0.85"/>
<rect x="413.5" y="203" width="2.5" height="172" fill="rgb(255,210,0)" opacity="0.80"/>
<rect x="416.0" y="203" width="2.0" height="120" fill="rgb(170,255,0)" opacity="0.85"/>
<rect x="418.0" y="203" width="11.0" height="95" fill="rgb(255,255,0)" opacity="0.95"/>
<rect x="429.0" y="203" width="2.0" height="172" fill="rgb(255,225,0)" opacity="0.90"/>
<rect x="431.0" y="203" width="5.0" height="90" fill="rgb(255,255,0)" opacity="0.95"/>
<rect x="436.0" y="203" width="2.0" height="172" fill="rgb(255,255,120)" opacity="0.90"/>
<rect x="438.0" y="203" width="2.0" height="172" fill="rgb(255,215,0)" opacity="0.85"/>
<rect x="440.0" y="203" width="2.0" height="172" fill="rgb(245,255,0)" opacity="0.85"/>
<rect x="442.0" y="203" width="2.0" height="172" fill="rgb(255,200,0)" opacity="0.85"/>
<rect x="444.0" y="203" width="2.5" height="172" fill="rgb(255,250,0)" opacity="0.90"/>
<rect x="446.5" y="203" width="2.0" height="172" fill="rgb(255,205,0)" opacity="0.85"/>
<rect x="400" y="277.4" width="1" height="91.1" fill="rgb(255,195,0)" opacity="0.51"/>
<rect x="430" y="237.6" width="1" height="113.6" fill="rgb(255,195,0)" opacity="0.57"/>
<rect x="402" y="204.8" width="1" height="53.4" fill="rgb(255,240,0)" opacity="0.37"/>
<rect x="444" y="313.5" width="1" height="97.2" fill="rgb(255,220,0)" opacity="0.40"/>
<rect x="421" y="273.3" width="1" height="64.2" fill="rgb(255,195,0)" opacity="0.56"/>
<rect x="441" y="257.9" width="1" height="105.6" fill="rgb(255,240,0)" opacity="0.51"/>
<rect x="398" y="314.8" width="1" height="51.0" fill="rgb(255,175,0)" opacity="0.57"/>
<rect x="447" y="248.8" width="1" height="82.7" fill="rgb(255,220,0)" opacity="0.47"/>
<rect x="407" y="206.9" width="1" height="40.1" fill="rgb(255,220,0)" opacity="0.49"/>
<rect x="407" y="317.4" width="1" height="93.1" fill="rgb(255,195,0)" opacity="0.31"/>
<rect x="405" y="284.5" width="1" height="96.3" fill="rgb(255,255,0)" opacity="0.32"/>
<rect x="434" y="226.3" width="1" height="115.9" fill="rgb(255,195,0)" opacity="0.46"/>
<rect x="439" y="305.9" width="1" height="98.0" fill="rgb(255,255,0)" opacity="0.51"/>
<rect x="421" y="231.8" width="1" height="48.3" fill="rgb(255,255,0)" opacity="0.31"/>
<rect x="448" y="299.5" width="1" height="86.8" fill="rgb(255,255,0)" opacity="0.39"/>
<rect x="403" y="214.4" width="1" height="98.2" fill="rgb(255,220,0)" opacity="0.36"/>
<rect x="417" y="252.6" width="1" height="31.9" fill="rgb(255,195,0)" opacity="0.38"/>
<rect x="415" y="286.7" width="1" height="63.1" fill="rgb(255,255,0)" opacity="0.40"/>
<rect x="435" y="258.7" width="1" height="55.9" fill="rgb(255,240,0)" opacity="0.52"/>
<rect x="447" y="206.7" width="1" height="76.7" fill="rgb(255,175,0)" opacity="0.33"/>
<rect x="427" y="265.9" width="1" height="49.5" fill="rgb(255,255,0)" opacity="0.56"/>
<rect x="402" y="298.9" width="1" height="45.3" fill="rgb(255,240,0)" opacity="0.30"/>
<rect x="409" y="292.2" width="1" height="118.0" fill="rgb(255,195,0)" opacity="0.30"/>
<rect x="428" y="260.5" width="1" height="101.7" fill="rgb(255,255,0)" opacity="0.36"/>
<rect x="428" y="243.6" width="1" height="104.9" fill="rgb(255,240,0)" opacity="0.38"/>
<rect x="407" y="298.4" width="1" height="114.4" fill="rgb(255,195,0)" opacity="0.37"/>
<rect x="407" y="312.8" width="1" height="99.0" fill="rgb(255,255,0)" opacity="0.45"/>
<rect x="441" y="295.1" width="1" height="86.5" fill="rgb(255,240,0)" opacity="0.41"/>
<rect x="422" y="307.3" width="1" height="97.1" fill="rgb(255,175,0)" opacity="0.43"/>
<rect x="438" y="246.5" width="1" height="57.3" fill="rgb(255,255,0)" opacity="0.43"/>
<rect x="431" y="223.0" width="1" height="118.4" fill="rgb(255,240,0)" opacity="0.49"/>
<rect x="426" y="265.2" width="1" height="97.9" fill="rgb(255,220,0)" opacity="0.53"/>
<rect x="438" y="243.8" width="1" height="59.4" fill="rgb(255,255,0)" opacity="0.35"/>
<rect x="425" y="289.8" width="1" height="45.3" fill="rgb(255,240,0)" opacity="0.43"/>
<rect x="446" y="270.8" width="1" height="41.3" fill="rgb(255,195,0)" opacity="0.44"/>
<rect x="441" y="262.4" width="1" height="54.1" fill="rgb(255,220,0)" opacity="0.53"/>
<rect x="436" y="287.6" width="1" height="117.7" fill="rgb(255,220,0)" opacity="0.52"/>
<rect x="435" y="243.8" width="1" height="51.3" fill="rgb(255,240,0)" opacity="0.59"/>
<rect x="413" y="222.3" width="1" height="89.2" fill="rgb(255,255,0)" opacity="0.36"/>
<rect x="406" y="296.0" width="1" height="96.0" fill="rgb(255,220,0)" opacity="0.43"/>
<g clip-path="url(#ybc)"><path d="M390 270 C400 320 425 335 455 330 L455 380 L390 380Z" fill="rgb(255,150,0)" opacity="0.55" filter="url(#b3)"/>
<path d="M390 300 C402 350 430 360 455 356 L455 380 L390 380Z" fill="rgb(255,120,0)" opacity="0.35" filter="url(#b3)"/></g>
<rect x="418" y="292" width="31" height="1.500" fill="rgb(255,235,0)" opacity="0.35"/>
<rect x="418" y="296" width="31" height="1.500" fill="rgb(255,235,0)" opacity="0.35"/>
<rect x="418" y="300" width="31" height="1.500" fill="rgb(255,235,0)" opacity="0.35"/>
<rect x="418" y="304" width="31" height="1.500" fill="rgb(255,235,0)" opacity="0.35"/>
<rect x="418" y="308" width="31" height="1.500" fill="rgb(255,235,0)" opacity="0.35"/>
<rect x="418" y="312" width="31" height="1.500" fill="rgb(255,235,0)" opacity="0.35"/>
<rect x="418" y="316" width="31" height="1.500" fill="rgb(255,235,0)" opacity="0.35"/>
<rect x="418" y="320" width="31" height="1.500" fill="rgb(255,235,0)" opacity="0.35"/>
<rect x="418" y="324" width="31" height="1.500" fill="rgb(255,235,0)" opacity="0.35"/>
<rect x="418" y="328" width="31" height="1.500" fill="rgb(255,235,0)" opacity="0.35"/>
<rect x="418" y="332" width="31" height="1.500" fill="rgb(255,235,0)" opacity="0.35"/>
<rect x="418" y="336" width="31" height="1.500" fill="rgb(255,235,0)" opacity="0.35"/>
<rect x="418" y="340" width="31" height="1.500" fill="rgb(255,235,0)" opacity="0.35"/>
<rect x="418" y="344" width="31" height="1.500" fill="rgb(255,235,0)" opacity="0.35"/>
<rect x="418" y="348" width="31" height="1.500" fill="rgb(255,235,0)" opacity="0.35"/>
<rect x="418" y="352" width="31" height="1.500" fill="rgb(255,235,0)" opacity="0.35"/>
<rect x="418" y="356" width="31" height="1.500" fill="rgb(255,235,0)" opacity="0.35"/>
<rect x="418" y="360" width="31" height="1.500" fill="rgb(255,235,0)" opacity="0.35"/>
<rect x="418" y="364" width="31" height="1.500" fill="rgb(255,235,0)" opacity="0.35"/>
<rect x="418" y="368" width="31" height="1.500" fill="rgb(255,235,0)" opacity="0.35"/>
<rect x="418" y="372" width="31" height="1.500" fill="rgb(255,235,0)" opacity="0.35"/>
<path d="M397.500 299 C400 329 416 340 449 339" fill="none" stroke="#ff2a00" stroke-width="3.0" opacity="0.88"/>
<path d="M397.500 312 C400 342 416 353 449 352" fill="none" stroke="#ff3000" stroke-width="2.8" opacity="0.88"/>
<path d="M397.500 324 C400 354 416 365 449 364" fill="none" stroke="#ff3800" stroke-width="2.6" opacity="0.88"/>
<path d="M397.500 336 C400 366 416 377 449 376" fill="none" stroke="#ff3400" stroke-width="2.6" opacity="0.88"/>
<path d="M397.500 347 C400 377 416 388 449 387" fill="none" stroke="#ff4800" stroke-width="2.4" opacity="0.88"/>
<path d="M397.500 357 C400 387 416 398 449 397" fill="none" stroke="#ff5a00" stroke-width="2.2" opacity="0.88"/>
<path d="M449 339 C462 338 476 328 485 307" fill="none" stroke="#ff3a00" stroke-width="3.0" opacity="0.88"/>
<path d="M449 352 C462 351 476 341 485 320" fill="none" stroke="#ff8a00" stroke-width="2.8" opacity="0.88"/>
<path d="M449 364 C462 363 476 353 485 332" fill="none" stroke="#ffd000" stroke-width="2.6" opacity="0.88"/>
<path d="M449 376 C462 375 476 365 485 344" fill="none" stroke="#e8ff00" stroke-width="2.6" opacity="0.88"/>
<path d="M397 292v26" stroke="#ff2000" stroke-width="2" fill="none"/>
<rect x="455" y="203" width="5" height="55" fill="rgb(250,255,0)" opacity="0.9"/>
<rect x="452" y="203" width="1.500" height="172" fill="rgb(215,255,0)" opacity="0.85"/>
<rect x="464.500" y="203" width="1.500" height="60" fill="rgb(235,255,0)" opacity="0.85"/>
<rect x="452.0" y="232.0" width="2.0" height="2.5" fill="#ffd800" opacity="1.00"/>
<rect x="452.0" y="237.0" width="2.0" height="2.5" fill="#fff000" opacity="1.00"/>
<rect x="452.0" y="243.0" width="2.0" height="2.5" fill="#fff000" opacity="1.00"/>
<rect x="452.0" y="249.0" width="2.0" height="2.5" fill="#ffd800" opacity="1.00"/>
<rect x="452.0" y="256.0" width="2.0" height="2.5" fill="#f0ff00" opacity="1.00"/>
<rect x="452.0" y="261.0" width="2.0" height="2.5" fill="#ffd800" opacity="1.00"/>
<rect x="452.0" y="267.0" width="2.0" height="2.5" fill="#f0ff00" opacity="1.00"/>
<rect x="452.0" y="273.0" width="2.0" height="2.5" fill="#ffd800" opacity="1.00"/>
<rect x="452.0" y="280.0" width="2.0" height="2.5" fill="#f0ff00" opacity="1.00"/>
<rect x="452.0" y="287.0" width="2.0" height="2.5" fill="#ffd800" opacity="1.00"/>
<rect x="452.0" y="294.0" width="2.0" height="2.5" fill="#f0ff00" opacity="1.00"/>
<rect x="452.0" y="301.0" width="2.0" height="2.5" fill="#f0ff00" opacity="1.00"/>
<rect x="452.0" y="307.0" width="2.0" height="2.5" fill="#fff000" opacity="1.00"/>
<rect x="452.0" y="314.0" width="2.0" height="2.5" fill="#fff000" opacity="1.00"/>
<rect x="452.0" y="319.0" width="2.0" height="2.5" fill="#ffd800" opacity="1.00"/>
<rect x="452.0" y="326.0" width="2.0" height="2.5" fill="#fff000" opacity="1.00"/>
<rect x="455.5" y="232.0" width="4.0" height="2.5" fill="#f0ff00" opacity="1.00"/>
<rect x="455.5" y="246.0" width="4.0" height="2.5" fill="#f0ff00" opacity="1.00"/>
<rect x="455.5" y="253.0" width="4.0" height="2.5" fill="#f0ff00" opacity="1.00"/>
<rect x="455.5" y="264.0" width="4.0" height="2.5" fill="#ffd800" opacity="1.00"/>
<rect x="455.5" y="269.0" width="4.0" height="2.5" fill="#f0ff00" opacity="1.00"/>
<rect x="455.5" y="276.0" width="4.0" height="2.5" fill="#ffd800" opacity="1.00"/>
<rect x="455.5" y="282.0" width="4.0" height="2.5" fill="#ffd800" opacity="1.00"/>
<rect x="455.5" y="288.0" width="4.0" height="2.5" fill="#ffd800" opacity="1.00"/>
<rect x="455.5" y="294.0" width="4.0" height="2.5" fill="#fff000" opacity="1.00"/>
<rect x="455.5" y="311.0" width="4.0" height="2.5" fill="#f0ff00" opacity="1.00"/>
<rect x="455.5" y="324.0" width="4.0" height="2.5" fill="#fff000" opacity="1.00"/>
<rect x="460.5" y="232.0" width="2.0" height="2.5" fill="#f0ff00" opacity="1.00"/>
<rect x="460.5" y="237.0" width="2.0" height="2.5" fill="#fff000" opacity="1.00"/>
<rect x="460.5" y="244.0" width="2.0" height="2.5" fill="#fff000" opacity="1.00"/>
<rect x="460.5" y="251.0" width="2.0" height="2.5" fill="#f0ff00" opacity="1.00"/>
<rect x="460.5" y="257.0" width="2.0" height="2.5" fill="#ffd800" opacity="1.00"/>
<rect x="460.5" y="268.0" width="2.0" height="2.5" fill="#f0ff00" opacity="1.00"/>
<rect x="460.5" y="285.0" width="2.0" height="2.5" fill="#ffd800" opacity="1.00"/>
<rect x="460.5" y="292.0" width="2.0" height="2.5" fill="#f0ff00" opacity="1.00"/>
<rect x="460.5" y="298.0" width="2.0" height="2.5" fill="#fff000" opacity="1.00"/>
<rect x="460.5" y="311.0" width="2.0" height="2.5" fill="#fff000" opacity="1.00"/>
<rect x="460.5" y="317.0" width="2.0" height="2.5" fill="#f0ff00" opacity="1.00"/>
<rect x="460.5" y="323.0" width="2.0" height="2.5" fill="#ffd800" opacity="1.00"/>
<rect x="464.5" y="232.0" width="2.0" height="2.5" fill="#f0ff00" opacity="1.00"/>
<rect x="464.5" y="239.0" width="2.0" height="2.5" fill="#fff000" opacity="1.00"/>
<rect x="464.5" y="244.0" width="2.0" height="2.5" fill="#fff000" opacity="1.00"/>
<rect x="464.5" y="250.0" width="2.0" height="2.5" fill="#ffd800" opacity="1.00"/>
<rect x="464.5" y="257.0" width="2.0" height="2.5" fill="#fff000" opacity="1.00"/>
<rect x="464.5" y="268.0" width="2.0" height="2.5" fill="#ffd800" opacity="1.00"/>
<rect x="464.5" y="274.0" width="2.0" height="2.5" fill="#f0ff00" opacity="1.00"/>
<rect x="464.5" y="288.0" width="2.0" height="2.5" fill="#ffd800" opacity="1.00"/>
<rect x="464.5" y="293.0" width="2.0" height="2.5" fill="#f0ff00" opacity="1.00"/>
<rect x="464.5" y="300.0" width="2.0" height="2.5" fill="#ffd800" opacity="1.00"/>
<rect x="464.5" y="305.0" width="2.0" height="2.5" fill="#f0ff00" opacity="1.00"/>
<rect x="464.5" y="310.0" width="2.0" height="2.5" fill="#fff000" opacity="1.00"/>
<rect x="464.5" y="315.0" width="2.0" height="2.5" fill="#fff000" opacity="1.00"/>
<rect x="464.5" y="322.0" width="2.0" height="2.5" fill="#ffd800" opacity="1.00"/>
<path d="M451 300 l15 -6" stroke="#ffd800" stroke-width="2.600" fill="none"/>
<path d="M451 268 l8 -6" stroke="#ffd800" stroke-width="2.600" fill="none"/>
<path d="M454 318 l6 -6" stroke="#ffd800" stroke-width="2.600" fill="none"/>
<rect x="482.500" y="203" width="3.500" height="172" fill="rgb(170,255,0)"/>
<rect x="483.500" y="203" width="1.500" height="172" fill="rgb(255,250,0)"/>
<rect x="483.500" y="308" width="2" height="34" fill="#ff3000"/>
</g>
<g shape-rendering="crispEdges" stroke="#000" stroke-width="1" fill="none">
<path d="M219.5 376.500V197.500H688.500V376.500"/>
<path d="M219.5 376.500H689"/>
<path d="M208 374.5H219"/>
<path d="M208 273.5H219"/>
<path d="M214 344.5H219"/>
<path d="M214 242.5H219"/>
<path d="M214 326.5H219"/>
<path d="M214 224.5H219"/>
<path d="M214 313.5H219"/>
<path d="M214 212.5H219"/>
<path d="M214 303.5H219"/>
<path d="M214 202.5H219"/>
<path d="M214 295.5H219"/>
<path d="M214 288.5H219"/>
<path d="M214 283.5H219"/>
<path d="M214 277.5H219"/>
<path d="M220.5 377V382"/>
<path d="M238.5 377V388"/>
<path d="M256.5 377V382"/>
<path d="M274.5 377V382"/>
<path d="M292.5 377V382"/>
<path d="M310.5 377V382"/>
<path d="M328.5 377V382"/>
<path d="M346.5 377V382"/>
<path d="M364.5 377V382"/>
<path d="M382.5 377V382"/>
<path d="M400.5 377V382"/>
<path d="M418.5 377V382"/>
<path d="M436.5 377V382"/>
<path d="M454.5 377V388"/>
<path d="M472.5 377V382"/>
<path d="M490.5 377V382"/>
<path d="M508.5 377V382"/>
<path d="M526.5 377V382"/>
<path d="M544.5 377V382"/>
<path d="M562.5 377V382"/>
<path d="M580.5 377V382"/>
<path d="M598.5 377V382"/>
<path d="M616.5 377V382"/>
<path d="M634.5 377V382"/>
<path d="M652.5 377V382"/>
<path d="M670.5 377V388"/>
<path d="M688.5 377V382"/>
</g>
<rect x="704" y="198" width="16" height="179" fill="url(#cb)"/>
<g shape-rendering="crispEdges" stroke="#000" stroke-width="1" fill="none">
<path d="M720.500 198V378"/>
<path d="M704 377.5H732"/>
<path d="M721 363.5H726"/>
<path d="M721 350.5H732"/>
<path d="M721 337.5H726"/>
<path d="M721 323.5H732"/>
<path d="M721 310.5H726"/>
<path d="M721 297.5H732"/>
<path d="M721 284.5H726"/>
<path d="M721 270.5H732"/>
<path d="M721 257.5H726"/>
<path d="M721 244.5H732"/>
<path d="M721 230.5H726"/>
<path d="M721 217.5H732"/>
<path d="M721 204.5H726"/>
</g>
<g shape-rendering="crispEdges" stroke="#000" stroke-width="1" fill="none">
<path d="M219.500 621.500V440.500H688.500V621.500"/>
<path d="M219.500 621.500H689"/>
<path d="M214 621.5H219"/>
<path d="M208 599.5H219"/>
<path d="M214 580.5H219"/>
<path d="M208 562.5H219"/>
<path d="M214 545.5H219"/>
<path d="M208 529.5H219"/>
<path d="M214 514.5H219"/>
<path d="M208 500.5H219"/>
<path d="M214 487.5H219"/>
<path d="M208 474.5H219"/>
<path d="M214 462.5H219"/>
<path d="M208 451.5H219"/>
<path d="M214 440.5H219"/>
<path d="M220.5 622V627"/>
<path d="M238.5 622V633"/>
<path d="M256.5 622V627"/>
<path d="M274.5 622V627"/>
<path d="M292.5 622V627"/>
<path d="M310.5 622V627"/>
<path d="M328.5 622V627"/>
<path d="M346.5 622V627"/>
<path d="M364.5 622V627"/>
<path d="M382.5 622V627"/>
<path d="M400.5 622V627"/>
<path d="M418.5 622V627"/>
<path d="M436.5 622V627"/>
<path d="M454.5 622V633"/>
<path d="M472.5 622V627"/>
<path d="M490.5 622V627"/>
<path d="M508.5 622V627"/>
<path d="M526.5 622V627"/>
<path d="M544.5 622V627"/>
<path d="M562.5 622V627"/>
<path d="M580.5 622V627"/>
<path d="M598.5 622V627"/>
<path d="M616.5 622V627"/>
<path d="M634.5 622V627"/>
<path d="M652.5 622V627"/>
<path d="M670.5 622V633"/>
<path d="M688.5 622V627"/>
</g>
<g fill="none" stroke="#000" stroke-width="1.05" stroke-linejoin="round">
<polyline points="220.2,520.6 220.3,525.3 220.5,497.9 220.6,512.1 220.7,507.5 220.9,511.8 221.0,508.4 221.2,490.6 221.3,493.7 221.4,506.8 221.6,526.3 221.7,504.4 221.9,510.7 222.0,500.0 222.1,510.8 222.3,508.6 222.4,508.0 222.6,496.6 222.7,501.3 222.8,510.1 223.0,503.1 223.1,508.5 223.3,497.7 223.4,495.2 223.5,495.3 223.7,504.8 223.8,504.3 224.0,495.6 224.1,495.2 224.2,498.3 224.4,489.7 224.5,488.3 224.7,496.1 224.8,480.7 224.9,501.2 225.1,479.9 225.2,507.3 225.4,492.7 225.5,496.6 225.6,491.6 225.8,491.4 225.9,490.1 226.1,480.0 226.2,485.5 226.3,467.6 226.5,492.3 226.6,488.8 226.8,492.4 226.9,485.3 227.0,478.3 227.2,478.2 227.3,485.6 227.5,470.5 227.6,493.7 227.7,483.0 227.9,476.5 228.0,483.0 228.2,492.4 228.3,486.0 228.4,461.1 228.6,467.8 228.7,470.5 228.9,469.5 229.0,487.8 229.1,472.8 229.3,489.5 229.4,483.8 229.6,483.4 229.7,483.3 229.8,488.4 230.0,488.9 230.1,483.4 230.3,470.2 230.4,490.9 230.5,472.0 230.7,478.5 230.8,487.8 231.0,473.1 231.1,479.2 231.2,473.3 231.4,486.1 231.5,477.1 231.7,465.3 231.8,480.7 231.9,472.3 232.1,487.9 232.2,479.4 232.4,475.7 232.5,474.8 232.6,480.5 232.8,485.7 232.9,466.9 233.1,477.2 233.2,487.0 233.3,468.8 233.5,455.0 233.6,482.2 233.8,489.3 233.9,485.7 234.0,483.6 234.2,491.6 234.3,492.8 234.5,485.2 234.6,473.3 234.7,489.4 234.9,495.7 235.0,490.7 235.2,486.3 235.3,494.2 235.4,484.5 235.6,472.7 235.7,490.7 235.9,487.7 236.0,468.6 236.1,499.2 236.3,477.8 236.4,491.6 236.6,484.5 236.7,507.6 236.8,497.9 237.0,491.1 237.1,496.6 237.3,501.0 237.4,498.3 237.5,479.9 237.7,474.8 237.8,493.4 238.0,491.5 238.1,496.5 238.2,510.2 238.4,488.1 238.5,497.3 238.7,498.4 238.8,511.8 238.9,506.4 239.1,485.5 239.2,492.9 239.4,505.6 239.5,487.1 239.6,502.1 239.8,485.5 239.9,503.9 240.1,502.8 240.2,501.5 240.3,491.6 240.5,500.0 240.6,494.1 240.8,494.2 240.9,492.0 241.0,517.2 241.2,497.6 241.3,511.6 241.5,497.1 241.6,496.8 241.7,512.6 241.9,505.2 242.0,513.3 242.2,498.4 242.3,499.0 242.4,520.2 242.6,504.4 242.7,502.8 242.9,516.8 243.0,504.2 243.1,507.7 243.3,504.4 243.4,503.9 243.6,512.2 243.7,509.4 243.8,508.4 244.0,523.8 244.1,508.8 244.3,522.2 244.4,512.1 244.5,507.5 244.7,502.3 244.8,523.2 245.0,512.0 245.1,520.1 245.2,526.1 245.4,507.0 245.5,512.0 245.7,519.6 245.8,515.0 245.9,524.1 246.1,509.1 246.2,525.3 246.4,530.2 246.5,519.4 246.6,528.7 246.8,515.0 246.9,523.1 247.1,532.6 247.2,521.0 247.3,525.3 247.5,524.3 247.6,519.5 247.8,531.0 247.9,523.6 248.0,525.0 248.2,520.4 248.3,534.7 248.5,528.3 248.6,540.2 248.7,519.1 248.9,525.5 249.0,534.7 249.2,532.7 249.3,531.8 249.4,540.2 249.6,522.1 249.7,531.8 249.9,530.0 250.0,527.1 250.1,535.0 250.3,541.7 250.4,540.8 250.6,533.2 250.7,535.2 250.8,542.1 251.0,533.1 251.1,533.5 251.3,544.0 251.4,543.3 251.5,537.8 251.7,544.9 251.8,534.3 252.0,540.7 252.1,537.4 252.2,530.5 252.4,547.1 252.5,546.9 252.7,545.3 252.8,544.3 252.9,537.7 253.1,538.2 253.2,548.3 253.4,538.6 253.5,541.7 253.6,539.9 253.8,545.5 253.9,550.2 254.1,540.7 254.2,535.9 254.3,539.6 254.5,543.8 254.6,546.5 254.8,550.5 254.9,547.1 255.0,542.4 255.2,546.3 255.3,548.7 255.5,545.0 255.6,544.2 255.7,546.7 255.9,542.3 256.0,553.6 256.2,550.0 256.3,546.9 256.4,547.4 256.6,557.7 256.7,548.5 256.9,550.4 257.0,546.6 257.1,557.6 257.3,547.9 257.4,550.8 257.6,554.4 257.7,557.3 257.8,556.7 258.0,557.3 258.1,558.0 258.3,562.2 258.4,549.0 258.5,556.6 258.7,561.7 258.8,555.3 259.0,561.3 259.1,555.6 259.2,556.9 259.4,555.2 259.5,558.9 259.7,556.2 259.8,562.7 259.9,554.5 260.1,554.0 260.2,566.6 260.4,556.2 260.5,562.5 260.6,554.8 260.8,549.6 260.9,559.2 261.1,563.4 261.2,558.8 261.3,558.6 261.5,560.6 261.6,556.7 261.8,556.6 261.9,560.5 262.0,553.7 262.2,557.2 262.3,559.2 262.5,563.8 262.6,557.7 262.7,564.1 262.9,558.7 263.0,554.6 263.2,563.8 263.3,565.5 263.4,560.5 263.6,563.9 263.7,554.6 263.9,558.5 264.0,560.7 264.1,559.5 264.3,563.8 264.4,553.3 264.6,561.5 264.7,555.0 264.8,562.2 265.0,558.6 265.1,559.4 265.3,560.6 265.4,564.5 265.5,553.5 265.7,552.8 265.8,556.3 266.0,563.4 266.1,551.9 266.2,563.2 266.4,562.8 266.5,557.2 266.7,556.7 266.8,561.9 266.9,560.7 267.1,556.9 267.2,562.5 267.4,561.2 267.5,569.0 267.6,565.8 267.8,566.4 267.9,560.6 268.1,567.4 268.2,567.5 268.3,562.0 268.5,560.5 268.6,567.2 268.8,566.6 268.9,560.7 269.0,561.0 269.2,562.2 269.3,560.7 269.5,563.5 269.6,569.9 269.7,563.6 269.9,562.2 270.0,567.9 270.2,568.7 270.3,561.9 270.4,565.1 270.6,569.3 270.7,563.1 270.9,568.6 271.0,573.4 271.1,566.9 271.3,570.1 271.4,564.8 271.6,568.1 271.7,565.0 271.8,564.8 272.0,564.0 272.1,568.2 272.3,570.6 272.4,569.6 272.5,566.4 272.7,573.8 272.8,566.7 273.0,564.8 273.1,567.4 273.2,565.9 273.4,572.5 273.5,567.0 273.7,573.4 273.8,573.3 273.9,565.9 274.1,565.0 274.2,571.6 274.4,569.1 274.5,572.2 274.6,573.9 274.8,564.1 274.9,574.9 275.1,563.1 275.2,567.6 275.3,567.9 275.5,576.8 275.6,572.0 275.8,568.9 275.9,573.5 276.0,566.4 276.2,574.8 276.3,567.1 276.5,567.8 276.6,568.1 276.7,569.3 276.9,575.9 277.0,571.5 277.2,576.4 277.3,568.5 277.4,572.1 277.6,575.1 277.7,576.7 277.9,576.6 278.0,572.4 278.1,577.9 278.3,568.2 278.4,576.7 278.6,573.9 278.7,574.9 278.8,570.9 279.0,570.1 279.1,569.4 279.3,575.5 279.4,570.7 279.5,573.0 279.7,572.0 279.8,574.9 280.0,571.9 280.1,574.4 280.2,570.1 280.4,575.1 280.5,577.1 280.7,569.5 280.8,565.8 280.9,578.0 281.1,570.9 281.2,573.9 281.4,564.9 281.5,580.2 281.6,569.4 281.8,580.2 281.9,569.7 282.1,575.3 282.2,568.6 282.3,576.4 282.5,580.0 282.6,571.7 282.8,580.1 282.9,579.0 283.0,571.0 283.2,579.2 283.3,570.8 283.5,579.1 283.6,581.4 283.7,572.5 283.9,575.3 284.0,578.7 284.2,568.8 284.3,576.0 284.4,576.9 284.6,579.8 284.7,570.1 284.9,577.8 285.0,569.8 285.1,564.7 285.3,578.2 285.4,567.5 285.6,578.0 285.7,572.5 285.8,575.4 286.0,572.3 286.1,572.4 286.3,577.2 286.4,568.8 286.5,572.2 286.7,564.6 286.8,570.5 287.0,578.5 287.1,577.1 287.2,578.2 287.4,575.9 287.5,573.6 287.7,573.1 287.8,571.8 287.9,569.5 288.1,565.7 288.2,574.0 288.4,566.5 288.5,570.0 288.6,570.5 288.8,572.2 288.9,579.1 289.1,578.4 289.2,571.8 289.3,568.0 289.5,571.6 289.6,571.1 289.8,569.0 289.9,565.5 290.0,575.5 290.2,573.7 290.3,566.0 290.5,577.8 290.6,580.6 290.7,571.9 290.9,566.3 291.0,565.2 291.2,573.1 291.3,567.3 291.4,574.0 291.6,576.5 291.7,576.3 291.9,577.0 292.0,566.7 292.1,569.1 292.3,573.9 292.4,566.1 292.6,574.8 292.7,573.8 292.8,565.7 293.0,581.3 293.1,574.1 293.3,567.1 293.4,576.5 293.5,562.4 293.7,572.9 293.8,568.5 294.0,580.7 294.1,572.3 294.2,576.4 294.4,564.3 294.5,566.4 294.7,577.6 294.8,579.8 294.9,574.5 295.1,580.1 295.2,584.0 295.4,566.3 295.5,565.8 295.6,561.4 295.8,567.4 295.9,570.7 296.1,571.2 296.2,567.6 296.3,558.7 296.5,571.0 296.6,563.8 296.8,563.3 296.9,567.6 297.0,568.5 297.2,571.3 297.3,571.1 297.5,568.2 297.6,561.5 297.7,572.0 297.9,568.2 298.0,569.4 298.2,564.3 298.3,561.0 298.4,558.6 298.6,559.8 298.7,562.4 298.9,557.6 299.0,547.3 299.1,568.6 299.3,560.3 299.4,548.0 299.6,556.9 299.7,564.5 299.8,568.1 300.0,567.4 300.1,561.6 300.3,568.0 300.4,563.6 300.5,557.7 300.7,565.3 300.8,547.4 301.0,552.8 301.1,551.5 301.2,550.8 301.4,562.9 301.5,550.1 301.7,564.0 301.8,547.2 301.9,561.7 302.1,555.4 302.2,561.1 302.4,548.8 302.5,558.4 302.6,551.9 302.8,550.9 302.9,545.0 303.1,550.1 303.2,554.7 303.3,565.0 303.5,553.7 303.6,544.5 303.8,556.2 303.9,542.0 304.0,560.7 304.2,550.4 304.3,553.1 304.5,554.1 304.6,548.3 304.7,546.9 304.9,555.4 305.0,547.5 305.2,558.6 305.3,546.7 305.4,537.1 305.6,549.7 305.7,554.4 305.9,557.8 306.0,537.2 306.1,549.4 306.3,560.6 306.4,540.8 306.6,552.7 306.7,555.8 306.8,544.5 307.0,548.4 307.1,545.8 307.3,547.4 307.4,554.0 307.5,541.7 307.7,547.2 307.8,542.2 308.0,547.9 308.1,556.5 308.2,545.6 308.4,546.5 308.5,556.9 308.7,553.0 308.8,552.7 308.9,546.0 309.1,557.3 309.2,555.8 309.4,548.7 309.5,552.2 309.6,547.4 309.8,554.5 309.9,554.5 310.1,549.0 310.2,551.6 310.3,563.2 310.5,562.1 310.6,566.5 310.8,547.3 310.9,549.8 311.0,560.0 311.2,549.4 311.3,562.6 311.5,562.3 311.6,549.3 311.7,561.4 311.9,550.0 312.0,553.3 312.2,569.9 312.3,555.2 312.4,552.4 312.6,552.8 312.7,553.7 312.9,553.4 313.0,555.5 313.1,559.3 313.3,571.4 313.4,565.9 313.6,554.0 313.7,560.4 313.8,558.9 314.0,565.5 314.1,563.3 314.3,561.8 314.4,569.1 314.5,565.0 314.7,558.7 314.8,569.7 315.0,560.2 315.1,556.4 315.2,554.3 315.4,569.8 315.5,564.8 315.7,552.9 315.8,569.1 315.9,568.8 316.1,560.8 316.2,578.0 316.4,570.9 316.5,570.4 316.6,566.1 316.8,559.3 316.9,567.3 317.1,566.0 317.2,562.0 317.3,563.9 317.5,562.3 317.6,554.5 317.8,554.4 317.9,557.4 318.0,557.5 318.2,568.6 318.3,556.1 318.5,555.4 318.6,563.4 318.7,552.6 318.9,558.6 319.0,548.4 319.2,557.2 319.3,543.0 319.4,542.3 319.6,554.5 319.7,545.0 319.9,556.7 320.0,545.9 320.1,551.7 320.3,539.0 320.4,542.4 320.6,539.3 320.7,540.6 320.8,545.0 321.0,548.8 321.1,537.4 321.3,536.1 321.4,532.7 321.5,537.3 321.7,544.4 321.8,536.6 322.0,535.2 322.1,533.2 322.2,539.1 322.4,533.0 322.5,536.5 322.7,528.6 322.8,537.7 322.9,536.3 323.1,524.8 323.2,530.0 323.4,531.7 323.5,533.9 323.6,530.1 323.8,536.4 323.9,529.3 324.1,528.2 324.2,529.0 324.3,531.3 324.5,532.8 324.6,528.2 324.8,519.1 324.9,519.1 325.0,532.7 325.2,530.3 325.3,528.4 325.5,516.9 325.6,522.5 325.7,531.6 325.9,518.6 326.0,535.2 326.2,518.3 326.3,518.4 326.4,526.7 326.6,520.6 326.7,512.9 326.9,525.2 327.0,524.5 327.1,519.6 327.3,516.3 327.4,517.8 327.6,515.4 327.7,512.3 327.8,511.9 328.0,517.1 328.1,517.3 328.3,511.9 328.4,511.8 328.5,520.5 328.7,514.0 328.8,513.4 329.0,505.9 329.1,524.6 329.2,505.3 329.4,506.9 329.5,487.0 329.7,512.3 329.8,515.4 329.9,505.9 330.1,504.1 330.2,497.7 330.4,516.4 330.5,508.5 330.6,504.8 330.8,494.5 330.9,520.7 331.1,504.4 331.2,510.2 331.3,522.6 331.5,503.0 331.6,498.2 331.8,517.4 331.9,493.5 332.0,508.0 332.2,502.3 332.3,509.2 332.5,516.7 332.6,491.4 332.7,515.1 332.9,501.3 333.0,495.4 333.2,499.1 333.3,486.2 333.4,509.2 333.6,479.1 333.7,489.3 333.9,507.2 334.0,500.6 334.1,510.4 334.3,509.1 334.4,477.6 334.6,490.0 334.7,505.7 334.8,492.5 335.0,475.4 335.1,496.4 335.3,486.8 335.4,472.6 335.5,472.7 335.7,478.3 335.8,459.0 336.0,493.4 336.1,489.2 336.2,459.9 336.4,477.5 336.5,476.6 336.7,469.1 336.8,479.2 336.9,471.0 337.1,468.3 337.2,490.8 337.4,500.8 337.5,481.0 337.6,483.8 337.8,474.7 337.9,473.1 338.1,470.1 338.2,484.2 338.3,487.7 338.5,477.2 338.6,493.0 338.8,473.3 338.9,488.8 339.0,473.6 339.2,492.3 339.3,483.0 339.5,486.8 339.6,474.4 339.7,485.7 339.9,477.0 340.0,494.8 340.2,479.2 340.3,476.7 340.4,484.4 340.6,502.1 340.7,488.6 340.9,496.5 341.0,495.9 341.1,481.9 341.3,498.4 341.4,479.6 341.6,508.5 341.7,494.4 341.8,481.3 342.0,501.0 342.1,496.4 342.3,497.9 342.4,489.3 342.5,497.6 342.7,486.4 342.8,492.0 343.0,482.6 343.1,498.0 343.2,499.2 343.4,485.1 343.5,486.2 343.7,500.9 343.8,496.4 343.9,497.9 344.1,495.5 344.2,498.6 344.4,481.2 344.5,498.7 344.6,492.7 344.8,489.8 344.9,502.4 345.1,487.8 345.2,488.5 345.3,482.0 345.5,498.1 345.6,479.3 345.8,494.1 345.9,492.9 346.0,478.0 346.2,475.5 346.3,479.1 346.5,500.6 346.6,479.6 346.7,490.5 346.9,484.0 347.0,500.3 347.2,502.4 347.3,476.3 347.4,507.9 347.6,484.6 347.7,478.1 347.9,473.6 348.0,464.0 348.1,482.9 348.3,499.4 348.4,474.3 348.6,486.1 348.7,483.9 348.8,492.6 349.0,489.6 349.1,501.9 349.3,485.3 349.4,476.1 349.5,496.0 349.7,489.0 349.8,503.1 350.0,482.6 350.1,480.4 350.2,496.4 350.4,487.0 350.5,500.4 350.7,486.2 350.8,486.9 350.9,491.3 351.1,498.7 351.2,500.0 351.4,509.2 351.5,501.1 351.6,485.0 351.8,506.0 351.9,497.0 352.1,508.5 352.2,486.8 352.3,483.6 352.5,494.3 352.6,488.8 352.8,489.8 352.9,487.2 353.0,496.3 353.2,514.4 353.3,491.2 353.5,499.3 353.6,505.5 353.7,514.5 353.9,501.2 354.0,507.8 354.2,496.0 354.3,516.4 354.4,497.2 354.6,496.7 354.7,490.4 354.9,507.1 355.0,519.2 355.1,508.3 355.3,514.2 355.4,504.0 355.6,495.1 355.7,512.1 355.8,512.2 356.0,517.0 356.1,522.9 356.3,505.1 356.4,520.8 356.5,502.1 356.7,514.1 356.8,519.5 357.0,503.1 357.1,501.8 357.2,517.0 357.4,523.5 357.5,515.7 357.7,512.3 357.8,530.6 357.9,510.0 358.1,531.5 358.2,538.6 358.4,536.0 358.5,535.6 358.6,521.8 358.8,542.8 358.9,544.2 359.1,551.7 359.2,536.3 359.3,535.8 359.5,563.8 359.6,549.5 359.8,546.0 359.9,564.1 360.0,555.8 360.2,558.6 360.3,579.0"/>
<polyline points="373.3,550.0 373.4,527.7 373.5,533.0 373.7,521.3 373.8,513.0 374.0,507.1 374.1,521.4 374.2,489.4 374.4,486.3 374.5,509.6 374.7,508.5 374.8,496.1 374.9,500.8 375.1,507.9 375.2,504.2 375.4,489.0 375.5,480.8 375.6,481.6 375.8,494.5 375.9,488.8 376.1,482.3 376.2,499.2 376.3,490.3 376.5,482.5 376.6,482.5 376.8,491.4 376.9,501.4 377.0,500.7 377.2,495.3 377.3,471.3 377.5,498.6 377.6,493.0 377.7,494.9 377.9,501.5 378.0,484.5 378.2,499.3 378.3,475.2 378.4,481.9 378.6,489.3 378.7,499.4 378.9,489.4 379.0,492.3 379.1,480.9 379.3,479.0 379.4,494.7 379.6,500.8 379.7,495.2 379.8,496.9 380.0,479.7 380.1,491.8 380.3,479.0 380.4,496.3 380.5,479.9 380.7,483.7 380.8,492.7 381.0,489.5 381.1,483.2 381.2,498.3 381.4,480.3 381.5,487.2 381.7,490.4 381.8,492.8 381.9,478.2 382.1,477.5 382.2,485.1 382.4,492.0 382.5,490.2 382.6,501.6 382.8,476.6 382.9,497.3 383.1,483.2 383.2,493.0 383.3,469.8 383.5,496.1 383.6,474.7 383.8,490.9 383.9,494.3 384.0,493.8 384.2,493.4 384.3,473.5 384.5,494.9 384.6,474.3 384.7,472.6 384.9,491.7 385.0,469.4 385.2,482.9 385.3,481.3 385.4,483.3 385.6,482.5 385.7,474.9 385.9,467.0 386.0,467.0 386.1,488.0 386.3,468.8 386.4,470.8 386.6,467.7 386.7,479.7 386.8,466.4 387.0,488.0 387.1,465.8 387.3,471.4 387.4,466.4 387.5,491.3 387.7,457.4 387.8,482.1 388.0,476.5 388.1,472.7 388.2,480.1 388.4,482.6 388.5,488.2 388.7,484.0 388.8,485.8 388.9,497.7 389.1,471.7 389.2,464.9 389.4,449.0 389.5,461.0 389.6,491.8 389.8,490.8 389.9,488.3 390.1,486.2 390.2,470.2 390.3,463.4 390.5,492.7 390.6,475.1 390.8,490.5 390.9,491.8 391.0,470.2 391.2,477.7 391.3,480.2 391.5,486.8 391.6,490.7 391.7,500.6 391.9,500.5 392.0,473.7 392.2,482.3 392.3,474.5 392.4,497.1 392.6,481.0 392.7,497.6 392.9,500.2 393.0,485.4 393.1,479.2 393.3,485.6 393.4,509.8 393.6,498.9 393.7,499.8 393.8,475.9 394.0,519.0 394.1,496.4 394.3,509.5 394.4,486.3 394.5,481.9 394.7,487.0 394.8,486.4 395.0,474.1 395.1,479.8 395.2,468.9 395.4,473.0 395.5,488.1 395.7,463.1 395.8,483.1 395.9,476.5 396.1,453.9 396.2,484.2 396.4,473.0 396.5,448.0 396.6,488.1 396.8,464.3 396.9,458.7 397.1,462.3 397.2,458.8 397.3,477.7 397.5,467.3 397.6,459.3 397.8,468.4 397.9,475.4 398.0,478.8 398.2,481.0 398.3,461.8 398.5,464.4 398.6,459.6 398.7,464.5 398.9,459.0 399.0,472.4 399.2,485.9 399.3,466.9 399.4,482.3 399.6,485.5 399.7,493.3 399.9,478.9 400.0,471.8 400.1,471.3 400.3,488.9 400.4,478.8 400.6,486.3 400.7,497.6 400.8,465.5 401.0,485.5 401.1,473.0 401.3,488.2 401.4,478.3 401.5,486.4 401.7,477.6 401.8,494.2 402.0,492.9 402.1,477.5 402.2,488.7 402.4,472.6 402.5,478.0 402.7,493.0 402.8,497.2 402.9,503.0 403.1,484.5 403.2,490.4 403.4,490.5 403.5,501.2 403.6,486.0 403.8,491.2 403.9,500.6 404.1,490.3 404.2,488.3 404.3,485.8 404.5,482.9 404.6,487.6 404.8,493.1 404.9,485.6 405.0,485.3 405.2,492.6 405.3,493.4 405.5,484.3 405.6,486.3 405.7,491.2 405.9,498.6 406.0,498.1 406.2,488.1 406.3,503.1 406.4,486.4 406.6,488.5 406.7,498.1 406.9,492.5 407.0,497.0 407.1,485.4 407.3,494.5 407.4,496.8 407.6,481.3 407.7,498.2 407.8,487.0 408.0,488.0 408.1,489.3 408.3,497.0 408.4,492.5 408.5,492.9 408.7,482.2 408.8,492.2 409.0,500.4 409.1,493.1 409.2,487.2 409.4,483.3 409.5,494.7 409.7,482.9 409.8,484.5 409.9,479.4 410.1,481.5 410.2,483.2 410.4,487.2 410.5,491.6 410.6,482.1 410.8,483.5 410.9,476.0 411.1,477.9 411.2,490.0 411.3,487.6 411.5,484.1 411.6,488.2 411.8,478.1 411.9,485.8 412.0,485.9 412.2,467.9 412.3,480.2 412.5,466.9 412.6,473.8 412.7,470.7 412.9,474.4 413.0,468.1 413.2,484.4 413.3,472.4 413.4,478.4 413.6,477.0 413.7,468.1 413.9,481.8 414.0,482.0 414.1,483.7 414.3,476.9 414.4,474.8 414.6,471.2 414.7,483.1 414.8,483.7 415.0,485.1 415.1,474.4 415.3,476.2 415.4,485.9 415.5,485.5 415.7,474.0 415.8,485.2 416.0,478.1 416.1,481.1 416.2,488.1 416.4,478.4 416.5,485.2 416.7,485.0 416.8,478.8 416.9,486.2 417.1,478.5 417.2,488.3 417.4,487.7 417.5,489.1 417.6,481.9 417.8,478.1 417.9,485.6 418.1,480.0 418.2,491.5 418.3,486.1 418.5,486.4 418.6,489.7 418.8,475.8 418.9,485.0 419.0,483.1 419.2,482.8 419.3,487.0 419.5,491.8 419.6,486.9 419.7,494.7 419.9,482.0 420.0,490.5 420.2,481.4 420.3,488.0 420.4,490.9 420.6,482.5 420.7,493.7 420.9,483.2 421.0,483.6 421.1,483.1 421.3,480.5 421.4,491.3 421.6,482.6 421.7,495.0 421.8,484.7 422.0,485.4 422.1,495.3 422.3,498.1 422.4,499.1 422.5,488.9 422.7,495.8 422.8,504.0 423.0,486.7 423.1,490.5 423.2,489.4 423.4,502.3 423.5,499.7 423.7,491.8 423.8,499.1 423.9,500.8 424.1,496.2 424.2,501.7 424.4,500.3 424.5,491.5 424.6,493.4 424.8,488.8 424.9,502.1 425.1,498.1 425.2,500.2 425.3,502.9 425.5,504.2 425.6,500.8 425.8,493.2 425.9,495.4 426.0,491.7 426.2,495.1 426.3,495.4 426.5,503.5 426.6,492.6 426.7,502.1 426.9,507.6 427.0,499.3 427.2,496.1 427.3,503.1 427.4,494.4 427.6,494.6 427.7,491.6 427.9,488.3 428.0,498.2 428.1,497.7 428.3,506.4 428.4,501.5 428.6,499.1 428.7,503.3 428.8,505.6 429.0,493.7 429.1,505.1 429.3,499.8 429.4,506.0 429.5,495.7 429.7,498.2 429.8,510.7 430.0,493.3 430.1,499.5 430.2,501.3 430.4,505.8 430.5,498.6 430.7,504.8 430.8,496.7 430.9,508.8 431.1,499.4 431.2,496.4 431.4,498.8 431.5,496.6 431.6,501.6 431.8,496.2 431.9,509.6 432.1,512.1 432.2,502.8 432.3,507.8 432.5,490.3 432.6,502.3 432.8,508.6 432.9,502.5 433.0,505.7 433.2,507.2 433.3,504.0 433.5,498.8 433.6,502.6 433.7,498.3 433.9,505.9 434.0,498.1 434.2,505.1 434.3,504.6 434.4,506.0 434.6,505.9 434.7,498.6 434.9,514.2 435.0,490.9 435.1,507.3 435.3,496.4 435.4,504.7 435.6,499.6 435.7,493.2 435.8,500.8 436.0,494.7 436.1,497.3 436.3,501.8 436.4,501.3 436.5,502.1 436.7,505.0 436.8,490.4 437.0,505.9 437.1,500.7 437.2,501.0 437.4,505.8 437.5,496.1 437.7,512.4 437.8,506.5 437.9,504.7 438.1,500.6 438.2,498.7 438.4,505.4 438.5,498.4 438.6,508.9 438.8,504.0 438.9,499.4 439.1,503.3 439.2,514.4 439.3,497.2 439.5,502.2 439.6,500.1 439.8,499.9 439.9,511.0 440.0,502.4 440.2,500.8 440.3,508.5 440.5,500.6 440.6,500.5 440.7,504.0 440.9,500.1 441.0,496.8 441.2,489.7 441.3,495.0 441.4,494.9 441.6,508.2 441.7,511.8 441.9,504.8 442.0,495.7 442.1,511.8 442.3,511.1 442.4,496.0 442.6,509.2 442.7,490.0 442.8,511.0 443.0,493.5 443.1,498.0 443.3,520.0 443.4,501.3 443.5,502.6 443.7,498.8 443.8,512.7 444.0,493.4 444.1,496.4 444.2,503.8 444.4,500.8 444.5,507.9 444.7,501.3 444.8,503.9 444.9,499.9 445.1,508.1 445.2,492.1 445.4,499.1 445.5,492.2 445.6,505.7 445.8,492.0 445.9,498.8 446.1,501.3 446.2,498.4 446.3,507.3 446.5,501.4 446.6,497.2 446.8,505.6 446.9,503.5 447.0,506.4 447.2,495.6 447.3,494.5 447.5,492.9 447.6,498.1 447.7,509.2 447.9,505.0 448.0,499.6 448.2,499.9 448.3,505.7 448.4,492.2 448.6,492.4 448.7,497.8 448.9,494.8 449.0,498.6 449.1,502.9 449.3,495.2 449.4,505.9 449.6,507.3 449.7,500.2 449.8,503.4 450.0,505.3 450.1,506.8 450.3,492.7 450.4,493.2 450.5,491.6 450.7,500.1 450.8,493.0 451.0,497.3 451.1,498.9 451.2,492.3 451.4,498.6 451.5,499.1 451.7,503.7 451.8,489.4 451.9,490.8 452.1,499.8 452.2,493.8 452.4,499.4 452.5,495.4 452.6,494.9 452.8,502.1 452.9,505.1 453.1,500.8 453.2,512.4 453.3,505.9 453.5,504.8 453.6,499.6 453.8,508.9 453.9,494.0 454.0,501.3 454.2,499.3 454.3,499.7 454.5,497.0 454.6,504.2 454.7,492.4 454.9,496.0 455.0,500.8 455.2,507.0 455.3,498.5 455.4,485.3 455.6,492.5 455.7,497.8 455.9,499.9 456.0,505.0 456.1,496.4 456.3,498.7 456.4,497.0 456.6,504.3 456.7,477.7 456.8,494.1 457.0,485.4 457.1,496.8 457.3,502.0 457.4,496.3 457.5,489.6 457.7,502.1 457.8,488.5 458.0,500.0 458.1,480.2 458.2,483.3 458.4,481.2 458.5,484.5 458.7,489.8 458.8,499.8 458.9,500.9 459.1,497.6 459.2,471.0 459.4,491.7 459.5,499.9 459.6,491.7 459.8,481.4 459.9,490.9 460.1,499.4 460.2,477.7 460.3,493.1 460.5,483.7 460.6,493.7 460.8,490.4 460.9,490.1 461.0,487.3 461.2,487.9 461.3,493.4 461.5,492.1 461.6,501.1 461.7,499.4 461.9,495.0 462.0,506.0 462.2,481.9 462.3,502.7 462.4,496.1 462.6,498.5 462.7,491.8 462.9,495.2 463.0,504.2 463.1,486.6 463.3,508.2 463.4,493.4 463.6,491.7 463.7,510.4 463.8,507.1 464.0,495.5 464.1,501.7 464.3,494.7 464.4,493.3 464.5,490.1 464.7,508.9 464.8,501.5 465.0,509.1 465.1,503.5 465.2,490.9 465.4,507.1 465.5,506.5 465.7,512.7 465.8,506.9 465.9,502.8 466.1,514.4 466.2,500.1 466.4,500.0 466.5,512.7 466.6,516.2 466.8,502.8 466.9,499.5 467.1,514.4 467.2,514.1 467.3,514.7 467.5,520.8 467.6,518.5 467.8,518.9 467.9,503.7 468.0,507.3 468.2,495.8 468.3,508.9 468.5,523.2 468.6,521.5 468.7,520.9 468.9,523.4 469.0,523.2 469.2,507.1 469.3,513.7 469.4,511.6 469.6,516.5 469.7,510.0 469.9,515.2 470.0,516.5 470.1,510.8 470.3,520.4 470.4,516.6 470.6,525.8 470.7,514.1 470.8,514.5 471.0,523.1 471.1,514.1 471.3,512.2 471.4,511.8 471.5,505.2 471.7,520.3 471.8,517.5 472.0,517.4 472.1,503.2 472.2,502.2 472.4,512.5 472.5,521.7 472.7,505.2 472.8,502.2 472.9,515.5 473.1,507.0 473.2,509.2 473.4,517.6 473.5,516.6 473.6,506.5 473.8,495.8 473.9,502.6 474.1,514.6 474.2,514.2 474.3,515.6 474.5,519.7 474.6,503.9 474.8,506.9 474.9,494.0 475.0,499.5 475.2,509.3 475.3,507.1 475.5,508.8 475.6,504.7 475.7,495.4 475.9,510.4 476.0,502.9 476.2,494.5 476.3,503.4 476.4,489.8 476.6,495.3 476.7,496.0 476.9,490.2 477.0,492.6 477.1,492.8 477.3,508.9 477.4,505.4 477.6,504.8 477.7,494.6 477.8,492.9 478.0,505.3 478.1,500.2 478.3,490.6 478.4,505.1 478.5,498.1 478.7,484.8 478.8,490.4 479.0,498.3 479.1,495.1 479.2,500.4 479.4,492.5 479.5,500.1 479.7,514.5 479.8,497.2 479.9,503.3 480.1,518.0 480.2,506.8 480.4,501.7 480.5,497.0 480.6,497.3 480.8,512.3 480.9,507.7 481.1,505.5 481.2,499.3 481.3,508.8 481.5,510.0 481.6,490.9 481.8,513.4 481.9,506.5 482.0,489.3 482.2,506.1 482.3,497.0 482.5,494.5 482.6,495.9 482.7,500.0 482.9,495.9 483.0,498.0 483.2,511.1 483.3,510.0 483.4,509.4 483.6,506.6 483.7,510.4 483.9,505.6 484.0,522.4 484.1,515.2 484.3,498.3 484.4,524.3 484.6,505.7 484.7,503.7 484.8,530.4 485.0,512.1 485.1,519.5 485.3,532.7 485.4,508.0 485.5,521.6 485.7,507.1 485.8,510.8 486.0,529.3 486.1,532.3 486.2,527.3 486.4,531.7 486.5,526.7 486.7,508.4 486.8,522.5 486.9,531.0 487.1,521.0 487.2,544.6 487.4,516.6 487.5,533.8 487.6,530.3 487.8,547.1 487.9,521.4 488.1,538.5 488.2,534.2 488.3,559.0 488.5,534.2 488.6,523.6 488.8,515.2 488.9,524.8 489.0,536.5 489.2,520.2 489.3,511.5 489.5,528.3 489.6,519.6 489.7,514.1 489.9,506.7 490.0,514.3 490.2,523.6 490.3,535.9 490.4,514.3 490.6,530.0 490.7,530.6 490.9,525.5 491.0,514.7 491.1,504.1 491.3,530.7 491.4,522.3 491.6,507.3 491.7,518.5 491.8,517.0 492.0,500.1 492.1,530.5 492.3,518.0 492.4,505.5 492.5,508.1 492.7,505.0 492.8,518.9 493.0,521.2 493.1,515.7 493.2,530.8 493.4,498.5 493.5,497.6 493.7,497.3 493.8,502.4 493.9,509.0 494.1,519.4 494.2,496.6 494.4,492.6 494.5,495.5 494.6,517.3 494.8,521.1 494.9,504.2 495.1,503.2 495.2,492.3 495.3,506.2 495.5,503.3 495.6,515.6 495.8,494.1 495.9,516.6 496.0,508.7 496.2,501.9 496.3,494.5 496.5,495.5 496.6,513.8 496.7,485.9 496.9,505.0 497.0,490.3 497.2,506.6 497.3,490.3 497.4,504.0 497.6,483.7 497.7,492.8 497.9,506.5 498.0,491.5 498.1,492.0 498.3,509.0 498.4,484.8 498.6,483.5 498.7,492.6 498.8,497.5 499.0,486.3 499.1,491.5 499.3,493.8 499.4,489.3 499.5,491.9 499.7,506.3 499.8,503.9 500.0,494.5 500.1,494.0 500.2,503.7 500.4,487.0 500.5,494.3 500.7,506.9 500.8,497.8 500.9,483.8 501.1,506.8 501.2,498.1 501.4,484.6 501.5,485.8 501.6,490.6 501.8,486.2 501.9,484.4 502.1,483.3 502.2,507.7 502.3,493.1 502.5,488.8 502.6,484.2 502.8,485.4 502.9,492.6 503.0,478.6 503.2,499.0 503.3,499.5 503.5,492.1 503.6,489.4 503.7,489.8 503.9,504.6 504.0,493.9 504.2,485.2 504.3,493.7 504.4,490.5 504.6,502.1 504.7,504.1 504.9,504.2 505.0,487.0 505.1,511.2 505.3,495.8 505.4,506.0 505.6,484.0 505.7,490.2 505.8,497.9 506.0,481.5 506.1,494.9 506.3,509.6 506.4,488.0 506.5,487.4 506.7,496.6 506.8,487.7 507.0,509.0 507.1,502.2 507.2,502.8 507.4,498.6 507.5,495.9 507.7,501.1 507.8,499.4 507.9,496.7 508.1,483.3 508.2,496.8 508.4,498.0 508.5,491.1 508.6,479.5 508.8,497.7 508.9,479.3 509.1,482.2 509.2,481.2 509.3,483.8 509.5,504.1 509.6,508.8 509.8,478.0 509.9,496.4 510.0,488.5 510.2,478.0 510.3,501.1 510.5,502.3 510.6,458.0 510.7,473.8 510.9,498.5 511.0,491.2 511.2,479.8 511.3,483.9 511.4,482.3 511.6,494.4 511.7,496.7 511.9,506.1 512.0,496.1 512.1,507.4 512.3,483.6 512.4,502.1 512.6,500.9 512.7,510.0 512.8,496.3 513.0,506.1 513.1,487.9 513.3,508.7 513.4,505.7 513.5,500.7 513.7,497.0 513.8,516.4 514.0,511.2 514.1,494.4 514.2,502.1 514.4,491.2 514.5,502.8 514.7,503.3 514.8,514.2 514.9,499.2 515.1,507.0 515.2,511.9 515.4,503.1 515.5,501.1 515.6,488.5 515.8,507.4 515.9,515.9 516.1,520.5 516.2,505.6 516.3,504.6 516.5,499.2 516.6,508.9 516.8,524.1 516.9,522.6 517.0,502.5 517.2,525.7 517.3,533.4 517.5,520.5 517.6,528.8 517.7,528.6 517.9,519.4 518.0,511.2 518.2,521.6 518.3,519.8 518.4,521.0 518.6,521.9 518.7,506.2 518.9,523.4 519.0,537.3 519.1,522.9 519.3,525.6 519.4,516.5 519.6,540.9 519.7,512.7 519.8,537.6 520.0,525.5 520.1,536.5 520.3,534.4 520.4,534.7 520.5,541.6 520.7,526.0 520.8,531.2 521.0,538.8 521.1,545.7 521.2,526.5 521.4,541.3 521.5,535.4 521.7,543.0 521.8,541.6 521.9,543.2 522.1,554.2"/>
<polyline points="534.0,557.5 534.1,571.7 534.3,573.5 534.4,561.9 534.6,538.1 534.7,559.4 534.8,552.3 535.0,551.2 535.1,531.7 535.3,548.7 535.4,537.3 535.5,541.2 535.7,518.3 535.8,545.4 536.0,536.8 536.1,528.1 536.2,506.5 536.4,526.8 536.5,502.6 536.7,523.2 536.8,492.2 536.9,505.9 537.1,521.6 537.2,496.4 537.4,496.9 537.5,515.6 537.6,508.4 537.8,497.4 537.9,504.6 538.1,520.0 538.2,515.0 538.3,503.1 538.5,509.0 538.6,507.4 538.8,510.1 538.9,521.9 539.0,514.5 539.2,532.6 539.3,520.3 539.5,509.7 539.6,504.0 539.7,512.4 539.9,531.2 540.0,510.5 540.2,526.7 540.3,500.2 540.4,520.2 540.6,516.8 540.7,511.0 540.9,507.9 541.0,523.5 541.1,523.4 541.3,531.6 541.4,511.8 541.6,502.8 541.7,487.7 541.8,516.2 542.0,518.7 542.1,501.6 542.3,490.5 542.4,530.6 542.5,489.7 542.7,496.4 542.8,514.3 543.0,503.5 543.1,498.6 543.2,500.0 543.4,515.5 543.5,489.7 543.7,482.2 543.8,466.0 543.9,491.7 544.1,487.0 544.2,491.8 544.4,465.8 544.5,480.0 544.6,503.8 544.8,482.4 544.9,490.0 545.1,465.6 545.2,497.8 545.3,486.7 545.5,502.7 545.6,474.4 545.8,495.8 545.9,473.0 546.0,472.4 546.2,493.6 546.3,486.7 546.5,506.4 546.6,486.3 546.7,482.3 546.9,490.7 547.0,483.2 547.2,475.9 547.3,492.2 547.4,476.8 547.6,476.7 547.7,469.4 547.9,498.7 548.0,493.7 548.1,477.4 548.3,479.8 548.4,481.7 548.6,489.3 548.7,503.2 548.8,507.2 549.0,471.7 549.1,483.7 549.3,502.5 549.4,489.3 549.5,462.0 549.7,478.8 549.8,471.9 550.0,493.6 550.1,492.8 550.2,496.0 550.4,479.3 550.5,491.9 550.7,479.3 550.8,481.4 550.9,496.5 551.1,479.1 551.2,477.5 551.4,477.2 551.5,490.3 551.6,502.0 551.8,484.4 551.9,498.3 552.1,485.7 552.2,486.0 552.3,492.1 552.5,513.4 552.6,517.7 552.8,479.9 552.9,484.1 553.0,493.4 553.2,500.6 553.3,504.2 553.5,511.5 553.6,518.7 553.7,508.7 553.9,527.1 554.0,530.2 554.2,520.1 554.3,503.1 554.4,522.8 554.6,513.5 554.7,505.1 554.9,513.0 555.0,506.2 555.1,502.3 555.3,518.4 555.4,507.6 555.6,505.9 555.7,505.0 555.8,527.2 556.0,532.7 556.1,517.3 556.3,516.3 556.4,523.6 556.5,538.4 556.7,530.6 556.8,544.4 557.0,512.2 557.1,530.7 557.2,530.1 557.4,545.1 557.5,522.7 557.7,525.7 557.8,521.5 557.9,514.3 558.1,516.3 558.2,533.7 558.4,542.7 558.5,539.1 558.6,536.9 558.8,517.1 558.9,529.8 559.1,541.1 559.2,519.1 559.3,516.4 559.5,548.1 559.6,552.8 559.8,539.7 559.9,524.7 560.0,532.2 560.2,523.5 560.3,525.5 560.5,547.8 560.6,524.7 560.7,538.6 560.9,528.8 561.0,557.9 561.2,538.1 561.3,533.2 561.4,546.1 561.6,554.0 561.7,543.1 561.9,534.9 562.0,539.9 562.1,530.2 562.3,544.5 562.4,551.6 562.6,554.1 562.7,549.4 562.8,550.2 563.0,537.4 563.1,558.5 563.3,534.3 563.4,537.0 563.5,557.8 563.7,559.5 563.8,553.1 564.0,556.5 564.1,555.2 564.2,561.3 564.4,541.1 564.5,551.3 564.7,556.5 564.8,551.4 564.9,551.2 565.1,568.3 565.2,553.1 565.4,560.5 565.5,578.7 565.6,573.8 565.8,557.7 565.9,543.9 566.1,572.1 566.2,551.9 566.3,571.9 566.5,557.7 566.6,573.2 566.8,568.4 566.9,581.4 567.0,592.0 567.2,583.0 567.3,571.2 567.5,580.0 567.6,571.2 567.7,563.4 567.9,582.6 568.0,553.3 568.2,561.9 568.3,561.7 568.4,581.5 568.6,562.9 568.7,586.0 568.9,564.7 569.0,574.9 569.1,549.1 569.3,560.1 569.4,576.0 569.6,572.7 569.7,575.7 569.8,559.5 570.0,571.3 570.1,553.0 570.3,564.3 570.4,571.2 570.5,571.9 570.7,572.1 570.8,590.4 571.0,591.4 571.1,593.8 571.2,583.9 571.4,599.5 571.5,573.6 571.7,577.6 571.8,570.3 571.9,586.1 572.1,563.1 572.2,567.5 572.4,571.3 572.5,582.9 572.6,572.7 572.8,573.9 572.9,591.2 573.1,588.1 573.2,557.1 573.3,570.4 573.5,582.5 573.6,584.4 573.8,573.2 573.9,590.0 574.0,608.0 574.2,573.9 574.3,569.5 574.5,577.3 574.6,566.5 574.7,591.7 574.9,586.6 575.0,575.2 575.2,569.1 575.3,567.9 575.4,579.0 575.6,595.6 575.7,572.0 575.9,587.2 576.0,572.6 576.1,569.9 576.3,582.9 576.4,584.2 576.6,594.4 576.7,568.9 576.8,568.4 577.0,572.2 577.1,573.1 577.3,593.1 577.4,571.4 577.5,591.5 577.7,573.0 577.8,567.6 578.0,577.8 578.1,584.6 578.2,580.4 578.4,571.6 578.5,595.4 578.7,595.1 578.8,584.5 578.9,572.7 579.1,572.6 579.2,579.0 579.4,593.1 579.5,592.3 579.6,594.8 579.8,574.7 579.9,589.9 580.1,599.2 580.2,583.8 580.3,580.7 580.5,585.5 580.6,595.6 580.8,590.6 580.9,595.3 581.0,587.2 581.2,579.8 581.3,594.0 581.5,605.9 581.6,574.1 581.7,587.2 581.9,587.6 582.0,604.4 582.2,594.1 582.3,590.7 582.4,592.1 582.6,576.3 582.7,588.7 582.9,588.7 583.0,598.0 583.1,585.2 583.3,582.3 583.4,595.3 583.6,583.2 583.7,588.0 583.8,585.1 584.0,593.3 584.1,590.4 584.3,589.7 584.4,576.7 584.5,594.6 584.7,582.9 584.8,594.8 585.0,586.3 585.1,574.5 585.2,578.9 585.4,585.1 585.5,605.8 585.7,597.9 585.8,588.1 585.9,592.1 586.1,601.3 586.2,595.1 586.4,583.3 586.5,580.2 586.6,601.6 586.8,600.9 586.9,580.5 587.1,578.5 587.2,584.5 587.3,591.0 587.5,584.5 587.6,594.2 587.8,588.8 587.9,588.1 588.0,603.8 588.2,598.9 588.3,597.4 588.5,581.4 588.6,595.4 588.7,583.7 588.9,585.7 589.0,579.8 589.2,585.5 589.3,585.2 589.4,581.4 589.6,591.7 589.7,578.6 589.9,595.3 590.0,584.4 590.1,601.9 590.3,600.9 590.4,577.7 590.6,583.6 590.7,586.0 590.8,600.3 591.0,598.9 591.1,586.2 591.3,600.7 591.4,586.4 591.5,583.2 591.7,606.8 591.8,579.1 592.0,572.9 592.1,602.7 592.2,589.1 592.4,602.2 592.5,591.2 592.7,590.9 592.8,596.4 592.9,599.4 593.1,592.2 593.2,583.0 593.4,578.5 593.5,608.4 593.6,587.3 593.8,593.4 593.9,600.1 594.1,581.6 594.2,599.4 594.3,570.6 594.5,598.2 594.6,588.6 594.8,584.7 594.9,573.7 595.0,580.0 595.2,590.2 595.3,587.2 595.5,587.8 595.6,597.5 595.7,575.0 595.9,595.7 596.0,603.0 596.2,597.0 596.3,582.4 596.4,599.6 596.6,591.9 596.7,595.7 596.9,584.2 597.0,594.3 597.1,606.6 597.3,588.3 597.4,596.7 597.6,586.2 597.7,607.2 597.8,605.6 598.0,597.7 598.1,585.3 598.3,614.0 598.4,592.9 598.5,597.0 598.7,574.1 598.8,580.2 599.0,579.8 599.1,608.4 599.2,590.1 599.4,588.5 599.5,593.3 599.7,581.1 599.8,587.0 599.9,583.0 600.1,594.5 600.2,580.8 600.4,588.2 600.5,588.9 600.6,603.9 600.8,601.8 600.9,570.8 601.1,599.1 601.2,593.6 601.3,583.9 601.5,583.2 601.6,609.6 601.8,599.9 601.9,576.5 602.0,579.2 602.2,596.9 602.3,568.9 602.5,578.3 602.6,596.9 602.7,581.6 602.9,578.6 603.0,575.4 603.2,585.7 603.3,595.2 603.4,599.6 603.6,597.9 603.7,576.8 603.9,580.3 604.0,583.0 604.1,576.0 604.3,577.5 604.4,586.4 604.6,586.8 604.7,582.2 604.8,592.0 605.0,595.3 605.1,594.2 605.3,587.4 605.4,570.1 605.5,568.1 605.7,590.4 605.8,593.5 606.0,592.7 606.1,578.4 606.2,582.2 606.4,576.3 606.5,587.5 606.7,576.6 606.8,576.8 606.9,584.9 607.1,593.3 607.2,586.9 607.4,590.1 607.5,572.0 607.6,569.1 607.8,576.8 607.9,582.8 608.1,571.7 608.2,564.8 608.3,577.2 608.5,578.5 608.6,579.2 608.8,571.4 608.9,587.3 609.0,570.9 609.2,590.6 609.3,575.1 609.5,581.5 609.6,575.0 609.7,583.8 609.9,583.9 610.0,564.3 610.2,588.2 610.3,590.1 610.4,573.7 610.6,574.2 610.7,587.3 610.9,577.9 611.0,575.3 611.1,583.9 611.3,590.1 611.4,572.6 611.6,582.9 611.7,580.4 611.8,580.9 612.0,572.9 612.1,574.7 612.3,587.4 612.4,582.4 612.5,566.1 612.7,580.6 612.8,570.6 613.0,573.8 613.1,579.5 613.2,587.8 613.4,577.2 613.5,585.4 613.7,583.9 613.8,582.8 613.9,587.4 614.1,580.4 614.2,577.0 614.4,583.6 614.5,582.1 614.6,576.5 614.8,582.1 614.9,587.3 615.1,573.1 615.2,577.5 615.3,576.4 615.5,568.4 615.6,577.9 615.8,569.8 615.9,575.4 616.0,574.1 616.2,577.4 616.3,578.4 616.5,585.3 616.6,573.6 616.7,580.8 616.9,565.1 617.0,570.5 617.2,573.9 617.3,584.4 617.4,577.0 617.6,578.1 617.7,581.4 617.9,566.5 618.0,575.6 618.1,566.8 618.3,572.3 618.4,570.5 618.6,572.0 618.7,581.6 618.8,569.9 619.0,565.4 619.1,571.3 619.3,579.0 619.4,585.2 619.5,570.8 619.7,572.8 619.8,572.8 620.0,566.5 620.1,584.1 620.2,574.1 620.4,566.1 620.5,565.4 620.7,580.2 620.8,572.4 620.9,578.8 621.1,583.0 621.2,565.5 621.4,564.8 621.5,573.0 621.6,577.9 621.8,571.9 621.9,577.3 622.1,578.8 622.2,562.7 622.3,569.7 622.5,575.0 622.6,563.7 622.8,578.8 622.9,568.8 623.0,570.3 623.2,564.1 623.3,572.9 623.5,562.2 623.6,568.0 623.7,564.3 623.9,557.3 624.0,561.4 624.2,577.2 624.3,569.1 624.4,570.8 624.6,567.5 624.7,574.0 624.9,555.7 625.0,563.9 625.1,575.9 625.3,575.7 625.4,572.0 625.6,575.8 625.7,557.3 625.8,569.0 626.0,553.9 626.1,574.8 626.3,562.8 626.4,560.2 626.5,573.0 626.7,569.1 626.8,568.0 627.0,558.8 627.1,555.7 627.2,561.7 627.4,566.3 627.5,572.9 627.7,561.2 627.8,570.8 627.9,564.0 628.1,572.6 628.2,559.8 628.4,561.8 628.5,564.6 628.6,561.2 628.8,568.9 628.9,565.6 629.1,559.3 629.2,563.5 629.3,567.0 629.5,560.1 629.6,567.6 629.8,569.0 629.9,554.5 630.0,553.4 630.2,564.0 630.3,559.7 630.5,554.7 630.6,565.0 630.7,552.2 630.9,563.4 631.0,560.6 631.2,560.0 631.3,558.2 631.4,554.7 631.6,565.8 631.7,549.2 631.9,552.3 632.0,557.5 632.1,564.7 632.3,562.5 632.4,558.3 632.6,554.8 632.7,562.0 632.8,567.5 633.0,561.5 633.1,562.9 633.3,557.5 633.4,546.9 633.5,560.1 633.7,547.1 633.8,540.0 634.0,554.0 634.1,554.7 634.2,544.1 634.4,545.0 634.5,543.8 634.7,541.2 634.8,552.9 634.9,561.7 635.1,549.8 635.2,555.3 635.4,541.0 635.5,548.3 635.6,546.8 635.8,550.0 635.9,545.1 636.1,543.7 636.2,544.4 636.3,536.2 636.5,554.9 636.6,549.9 636.8,533.3 636.9,551.3 637.0,531.3 637.2,544.5 637.3,545.1 637.5,532.8 637.6,530.9 637.7,548.3 637.9,539.2 638.0,538.0 638.2,531.6 638.3,525.3 638.4,546.2 638.6,526.9 638.7,529.3 638.9,537.7 639.0,539.3 639.1,540.9 639.3,514.0 639.4,525.1 639.6,545.4 639.7,534.4 639.8,531.1 640.0,520.9 640.1,538.0 640.3,534.9 640.4,529.8 640.5,534.4 640.7,550.1 640.8,536.2 641.0,533.6 641.1,534.5 641.2,558.2 641.4,545.1 641.5,563.9 641.7,569.8 641.8,557.1 641.9,552.6 642.1,555.6 642.2,565.5 642.4,542.9 642.5,560.0 642.6,573.6 642.8,553.3 642.9,563.3 643.1,545.7 643.2,569.8 643.3,571.9 643.5,567.4 643.6,565.8 643.8,569.4 643.9,564.2 644.0,551.2 644.2,555.9 644.3,570.2 644.5,540.5 644.6,584.8 644.7,558.4 644.9,574.5 645.0,567.9 645.2,562.8 645.3,557.3 645.4,546.3 645.6,565.6 645.7,589.2 645.9,553.9 646.0,551.1 646.1,554.6 646.3,564.0 646.4,564.5 646.6,563.4 646.7,559.3 646.8,569.3 647.0,561.7 647.1,551.2 647.3,562.1 647.4,560.0 647.5,560.6 647.7,559.4 647.8,563.7 648.0,559.8 648.1,568.6 648.2,571.7 648.4,548.1 648.5,575.2 648.7,592.0 648.8,558.0 648.9,576.1 649.1,569.2 649.2,576.7 649.4,564.4 649.5,571.7 649.6,553.6 649.8,580.9 649.9,580.7 650.1,578.3 650.2,562.6 650.3,547.9 650.5,572.6 650.6,581.0 650.8,578.4 650.9,548.1 651.0,581.5 651.2,570.3 651.3,564.8 651.5,555.9 651.6,585.1 651.7,569.2 651.9,560.7 652.0,560.3 652.2,558.3 652.3,568.9 652.4,554.6 652.6,568.1 652.7,558.1 652.9,576.5 653.0,547.7 653.1,573.8 653.3,556.3 653.4,580.8 653.6,569.5 653.7,585.8 653.8,570.3 654.0,588.2 654.1,578.0 654.3,571.2 654.4,579.1 654.5,558.7 654.7,553.1 654.8,572.9 655.0,582.5 655.1,589.3 655.2,568.4 655.4,555.8 655.5,563.8 655.7,555.5 655.8,559.0 655.9,557.1 656.1,569.2 656.2,578.2 656.4,570.0 656.5,575.5 656.6,571.2 656.8,556.1 656.9,576.1 657.1,557.2 657.2,566.6 657.3,569.7 657.5,557.1 657.6,564.2 657.8,535.9 657.9,574.9 658.0,545.6 658.2,569.6 658.3,562.2 658.5,559.2 658.6,569.4 658.7,556.4 658.9,551.9 659.0,542.1 659.2,566.7 659.3,554.3 659.4,554.3 659.6,563.6 659.7,541.3 659.9,560.1 660.0,541.7 660.1,549.7 660.3,547.0 660.4,559.4 660.6,544.9 660.7,546.2 660.8,541.8 661.0,568.5 661.1,538.2 661.3,522.5 661.4,561.1 661.5,531.6 661.7,532.7 661.8,554.3 662.0,532.8 662.1,528.4 662.2,542.2 662.4,533.2 662.5,542.1 662.7,522.2 662.8,543.6 662.9,523.0 663.1,529.3 663.2,547.0 663.4,542.4 663.5,527.2 663.6,529.6 663.8,533.7 663.9,521.7 664.1,520.7 664.2,541.7 664.3,525.8 664.5,514.6 664.6,541.9 664.8,517.1 664.9,519.9 665.0,513.1 665.2,520.8 665.3,524.9 665.5,546.1 665.6,536.6 665.7,513.6 665.9,528.3 666.0,515.8 666.2,523.3 666.3,506.5 666.4,519.8 666.6,510.1 666.7,515.0 666.9,506.7 667.0,523.8 667.1,517.5 667.3,509.5 667.4,513.8 667.6,499.4 667.7,505.0 667.8,498.0 668.0,525.7 668.1,524.8 668.3,503.8 668.4,494.8 668.5,511.9 668.7,510.4 668.8,503.2 669.0,526.5 669.1,522.0 669.2,516.0 669.4,526.1 669.5,500.4 669.7,514.0 669.8,520.5 669.9,523.0 670.1,509.3 670.2,512.0 670.4,595.5 670.5,497.8 670.6,517.4 670.8,512.9 670.9,507.2 671.1,504.2 671.2,505.4 671.3,494.0 671.5,522.1 671.6,516.5 671.8,499.8 671.9,503.4 672.0,521.5 672.2,482.9 672.3,523.8 672.5,499.9 672.6,518.3 672.7,502.2 672.9,494.8 673.0,517.0 673.2,514.1 673.3,496.6 673.4,515.7 673.6,497.0 673.7,485.8 673.9,527.9 674.0,497.0 674.1,518.0 674.3,510.3 674.4,512.9 674.6,524.6 674.7,524.3 674.8,507.3 675.0,515.0 675.1,536.0 675.3,517.8 675.4,515.9 675.5,520.4 675.7,509.9 675.8,503.5 676.0,508.0 676.1,513.0 676.2,525.4 676.4,490.7 676.5,524.5 676.7,499.4 676.8,527.0 676.9,530.0 677.1,498.9 677.2,499.2 677.4,512.6 677.5,504.0 677.6,490.8 677.8,525.3 677.9,497.6 678.1,527.4 678.2,507.5 678.3,542.2 678.5,505.4 678.6,492.4 678.8,526.0 678.9,523.0 679.0,538.3 679.2,522.2 679.3,539.5 679.5,528.0 679.6,521.8 679.7,527.8 679.9,511.9 680.0,520.9 680.2,532.5 680.3,510.9 680.4,523.6 680.6,520.0 680.7,527.7 680.9,522.5 681.0,510.2 681.1,516.9 681.3,523.0 681.4,540.9 681.6,523.6 681.7,536.2 681.8,546.2 682.0,545.9 682.1,551.6 682.3,535.9 682.4,539.5 682.5,555.1 682.7,538.5 682.8,539.2 683.0,539.3 683.1,540.1 683.2,551.5 683.4,562.1 683.5,547.7 683.7,568.5 683.8,561.0 683.9,582.4 684.1,573.6 684.2,567.1 684.4,585.0"/>
</g>
<g filter="url(#noop)">
<text x="454" y="187" text-anchor="middle">RBSP-A/EMFISIS &#160;HFR Spectra Data</text>
<text x="174" y="283.3">10</text><text x="193.300" y="274.8">5</text>
<text x="174" y="384.3">10</text><text x="193.300" y="375.8">4</text>
<text transform="translate(161,287.200) rotate(-90)" text-anchor="middle">Hz</text>
<text x="215.800" y="408.500">00:00</text><text x="215.800" y="424.600">2012-12-02</text>
<text x="647.800" y="408.500">00:00</text><text x="647.800" y="424.600">2012-12-03</text>
<text x="736.500" y="386.7">10</text><text x="756.500" y="379.1">-22</text>
<text x="736.500" y="359.7">10</text><text x="756.500" y="352.1">-20</text>
<text x="736.500" y="332.7">10</text><text x="756.500" y="325.1">-18</text>
<text x="736.500" y="306.7">10</text><text x="756.500" y="299.1">-16</text>
<text x="736.500" y="279.7">10</text><text x="756.500" y="272.1">-14</text>
<text x="736.500" y="253.7">10</text><text x="756.500" y="246.1">-12</text>
<text x="736.500" y="226.7">10</text><text x="756.500" y="219.1">-10</text>
<text transform="translate(805,288) rotate(-90)" text-anchor="middle">V^2/m^2/Hz</text>
<text x="295" y="413.700" textLength="315" lengthAdjust="spacing">RBSP-A/ECT HOPE electrons Tperp/Tpar</text>
<text x="202.500" y="605.2" text-anchor="end">1.2</text>
<text x="202.500" y="568.2" text-anchor="end">1.4</text>
<text x="202.500" y="535.2" text-anchor="end">1.6</text>
<text x="202.500" y="506.2" text-anchor="end">1.8</text>
<text x="202.500" y="480.2" text-anchor="end">2.0</text>
<text x="202.500" y="457.2" text-anchor="end">2.2</text>
<text transform="translate(166,531) rotate(-90)" text-anchor="middle">e Tperp/Tpar</text>
<text x="260.6" y="652.8" text-anchor="end">00:00</text>
<text x="260.6" y="672.6" text-anchor="end">4.225</text>
<text x="260.6" y="692.5" text-anchor="end">-10.580</text>
<text x="260.6" y="712.6" text-anchor="end">2.247</text>
<text x="260.6" y="732.7" text-anchor="end">4.373</text>
<text x="477.0" y="652.8" text-anchor="end">12:00</text>
<text x="477.0" y="672.6" text-anchor="end">5.756</text>
<text x="477.0" y="692.5" text-anchor="end">-1.544</text>
<text x="477.0" y="712.6" text-anchor="end">5.398</text>
<text x="477.0" y="732.7" text-anchor="end">5.760</text>
<text x="692.8" y="652.8" text-anchor="end">00:00</text>
<text x="692.8" y="672.6" text-anchor="end">3.179</text>
<text x="692.8" y="692.5" text-anchor="end">-16.190</text>
<text x="692.8" y="712.6" text-anchor="end">8.125</text>
<text x="692.8" y="732.7" text-anchor="end">3.447</text>
<text x="168.800" y="672.600" text-anchor="end">R</text><text x="174.500" y="677.700" text-anchor="end" font-size="8px" font-weight="bold">E</text>
<text x="174.500" y="692.500" text-anchor="end">MLat</text>
<text x="174.500" y="712.600" text-anchor="end">MLT</text>
<text x="174.500" y="732.700" text-anchor="end">L</text>
<text x="454" y="756.800" text-anchor="middle">2012-12-01 (336) 23:00 to 2012-12-03 (338) 01:00</text>
</g>
</svg>
<div class="abs" style="left:346px;top:358px;width:246px;height:90px;box-sizing:border-box;border:1px solid #8e8e8e;border-radius:5px 5px 0 0;background:#dedede;overflow:hidden">
<div class="abs" style="left:0;top:0;width:244px;height:25px;background:linear-gradient(#e4e4e4,#d2d2d2)"></div>
<div class="abs" style="left:2px;top:25px;width:240px;height:61px;background:#fdfdfd"></div>
</div>
<svg class="abs" style="left:346px;top:358px" width="246" height="26"><path d="M13.500 11h9l-4.500 6z" fill="#9a9a9a"/><path d="M223.500 10.500l7 7M230.500 10.500l-7 7" stroke="#9a9a9a" stroke-width="2" fill="none"/></svg>
<div class="abs" style="left:411.500px;top:364.800px;font-family:'DejaVu Sans Condensed','DejaVu Sans',sans-serif;font-weight:bold;font-size:13px;color:#7b7b7b;white-space:pre;line-height:16px;">Progress Monitor</div>
<div class="abs ui" style="left:349px;top:385px;width:240px;text-align:center;font-size:13.8px;line-height:14px">running batch</div>
<div class="abs" style="left:349px;top:402.800px;width:243px;text-align:center;font-size:7px;line-height:9px;color:#000;white-space:pre;letter-spacing:1.31px;font-weight:normal">write /hom...walk3/product_20121219_12.png</div>
<div class="abs" style="left:349px;top:411px;width:220px;height:20px;box-sizing:border-box;border:1px solid #7a8a99;border-top-color:#6382bf;border-left-color:#6382bf;background:#eeeeee"></div>
<div class="abs" style="left:350px;top:412px;width:133px;height:18px;background:#a3b8cc"></div>
<div class="abs" style="left:569px;top:411px;width:20px;height:20px;box-sizing:border-box;border:1px solid #7a8a99;background:linear-gradient(#e3ecf6 0%,#ffffff 40%,#c3d6ea 100%)"></div>
<svg class="abs" style="left:569px;top:411px" width="20" height="20"><defs><linearGradient id="rg" x1="0" y1="0" x2="0" y2="1"><stop offset="0" stop-color="#ee8890"/><stop offset="0.45" stop-color="#e9505c"/><stop offset="1" stop-color="#e82c3a"/></linearGradient></defs>
<rect x="3.500" y="3.500" width="13" height="13" rx="2.500" fill="url(#rg)" stroke="#d23440" stroke-width="1"/><path d="M5.500 15.700h9" stroke="#f0703a" stroke-width="0.800"/>
<path d="M7.300 7.300l5.400 5.400M12.700 7.300l-5.400 5.400" stroke="#f4f4f4" stroke-width="2.400" stroke-linecap="round" fill="none"/></svg>
<div class="abs ui" style="left:349px;top:432px;width:240px;text-align:center;letter-spacing:-0.13px">38/62 (48.4/min, eta 31.0 s)</div>

</body></html>
